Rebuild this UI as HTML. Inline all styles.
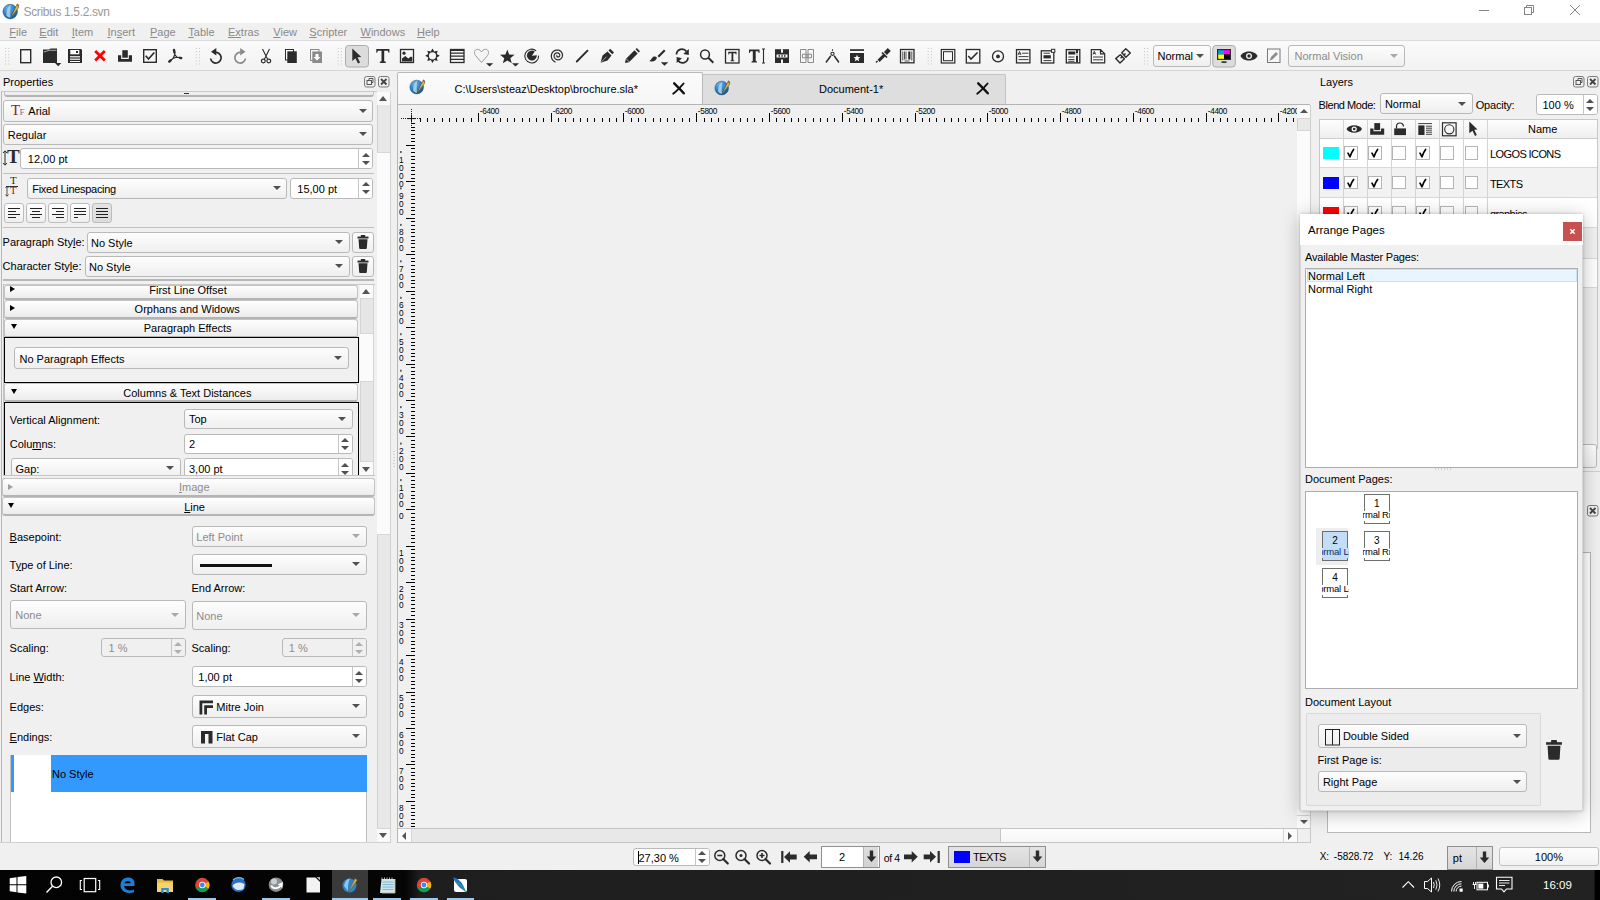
<!DOCTYPE html><html><head><meta charset="utf-8"><style>
*{margin:0;padding:0}
html,body{width:1600px;height:900px;overflow:hidden;background:#f0f0f0}
body{position:relative;font-family:"Liberation Sans",sans-serif;font-size:11px;color:#000}
body div{position:absolute;box-sizing:border-box}
.t{white-space:nowrap;line-height:14px;font-size:11px}
.combo{border:1px solid #b9b9b9;border-radius:3px;background:linear-gradient(#fdfdfd,#efefef)}
.spin{border:1px solid #b9b9b9;border-radius:3px;background:#fff;overflow:hidden}
.hdr{border:1px solid #c4c4c4;border-bottom:2px solid #b4b4b4;border-radius:3px;background:linear-gradient(#fefefe,#ececec)}
svg{position:absolute;overflow:visible}
u{text-decoration:underline}
</style></head><body><div style="left:0px;top:0px;width:1600px;height:23px;background:#fff"></div>
<svg style="left:1.5px;top:2px" width="17" height="17" viewBox="0 0 17 17">
<defs><radialGradient id="sgtitle" cx="0.35" cy="0.25" r="0.85"><stop offset="0" stop-color="#6fb4e6"/><stop offset="0.55" stop-color="#2a7cc0"/><stop offset="1" stop-color="#0d4f86"/></radialGradient></defs>
<circle cx="8.2" cy="9.6" r="7.3" fill="url(#sgtitle)" stroke="#174a73" stroke-width="0.5"/>
<path d="M8.8 2.6 C5.5 5 4 9.5 4.5 13.8 C6 15.2 7.5 15.8 8.6 15.9 C8 11 8.2 6.5 8.8 2.6 Z" fill="#a9d6f3" opacity="0.85"/>
<path d="M8.3 16.2 L14.6 3.2 L17 5.2 Z" fill="#d9b35a" stroke="#6b4c16" stroke-width="0.55" stroke-linejoin="round"/>
<path d="M14.3 2.5 L15.6 1.6 L17.3 3.4 L16.6 4.8 Z" fill="#8a6420"/>
</svg>
<div class="t" style="left:23.5px;top:4.64px;font-size:12px;line-height:14px;color:#999;letter-spacing:-0.35px">Scribus 1.5.2.svn</div>
<svg style="left:1470px;top:0" width="130" height="23">
<line x1="9" y1="10.5" x2="19" y2="10.5" stroke="#858585" stroke-width="1"/>
<rect x="54.5" y="7.5" width="7" height="7" fill="none" stroke="#858585"/>
<path d="M56.5 7.5 V5.5 H63.5 V12.5 H61.5" fill="none" stroke="#858585"/>
<path d="M100 5 L110 15 M110 5 L100 15" stroke="#858585" stroke-width="1"/>
</svg>
<div style="left:0px;top:23px;width:1600px;height:17px;background:#f0f0f0"></div>
<div class="t" style="left:9.3px;top:25.19px;font-size:11px;line-height:14px;color:#8a8a8a"><u>F</u>ile</div>
<div class="t" style="left:39.3px;top:25.19px;font-size:11px;line-height:14px;color:#8a8a8a"><u>E</u>dit</div>
<div class="t" style="left:71.8px;top:25.19px;font-size:11px;line-height:14px;color:#8a8a8a"><u>I</u>tem</div>
<div class="t" style="left:107.5px;top:25.19px;font-size:11px;line-height:14px;color:#8a8a8a"><u>I</u>n<u>s</u>ert</div>
<div class="t" style="left:150px;top:25.19px;font-size:11px;line-height:14px;color:#8a8a8a"><u>P</u>age</div>
<div class="t" style="left:188.3px;top:25.19px;font-size:11px;line-height:14px;color:#8a8a8a"><u>T</u>able</div>
<div class="t" style="left:228px;top:25.19px;font-size:11px;line-height:14px;color:#8a8a8a"><u>E</u><u>x</u>tras</div>
<div class="t" style="left:273.3px;top:25.19px;font-size:11px;line-height:14px;color:#8a8a8a"><u>V</u>iew</div>
<div class="t" style="left:309.3px;top:25.19px;font-size:11px;line-height:14px;color:#8a8a8a"><u>S</u>cripter</div>
<div class="t" style="left:360.5px;top:25.19px;font-size:11px;line-height:14px;color:#8a8a8a"><u>W</u>indows</div>
<div class="t" style="left:417px;top:25.19px;font-size:11px;line-height:14px;color:#8a8a8a"><u>H</u>elp</div>
<div style="left:0px;top:40px;width:1600px;height:31px;background:linear-gradient(#fafafa,#f2f2f2);border-top:1px solid #dcdcdc;border-bottom:1px solid #d6d6d6"></div>
<svg style="left:0;top:0" width="1600" height="72" viewBox="0 0 1600 72"><rect x="5.1" y="48.0" width="1" height="1" fill="#c4c4c4"/><rect x="5.1" y="51.1" width="1" height="1" fill="#c4c4c4"/><rect x="5.1" y="54.2" width="1" height="1" fill="#c4c4c4"/><rect x="5.1" y="57.3" width="1" height="1" fill="#c4c4c4"/><rect x="5.1" y="60.4" width="1" height="1" fill="#c4c4c4"/><rect x="5.1" y="63.5" width="1" height="1" fill="#c4c4c4"/><rect x="8.3" y="48.0" width="1" height="1" fill="#c4c4c4"/><rect x="8.3" y="51.1" width="1" height="1" fill="#c4c4c4"/><rect x="8.3" y="54.2" width="1" height="1" fill="#c4c4c4"/><rect x="8.3" y="57.3" width="1" height="1" fill="#c4c4c4"/><rect x="8.3" y="60.4" width="1" height="1" fill="#c4c4c4"/><rect x="8.3" y="63.5" width="1" height="1" fill="#c4c4c4"/><rect x="195.8" y="48.0" width="1" height="1" fill="#c4c4c4"/><rect x="195.8" y="51.1" width="1" height="1" fill="#c4c4c4"/><rect x="195.8" y="54.2" width="1" height="1" fill="#c4c4c4"/><rect x="195.8" y="57.3" width="1" height="1" fill="#c4c4c4"/><rect x="195.8" y="60.4" width="1" height="1" fill="#c4c4c4"/><rect x="195.8" y="63.5" width="1" height="1" fill="#c4c4c4"/><rect x="199.0" y="48.0" width="1" height="1" fill="#c4c4c4"/><rect x="199.0" y="51.1" width="1" height="1" fill="#c4c4c4"/><rect x="199.0" y="54.2" width="1" height="1" fill="#c4c4c4"/><rect x="199.0" y="57.3" width="1" height="1" fill="#c4c4c4"/><rect x="199.0" y="60.4" width="1" height="1" fill="#c4c4c4"/><rect x="199.0" y="63.5" width="1" height="1" fill="#c4c4c4"/><rect x="337.7" y="48.0" width="1" height="1" fill="#c4c4c4"/><rect x="337.7" y="51.1" width="1" height="1" fill="#c4c4c4"/><rect x="337.7" y="54.2" width="1" height="1" fill="#c4c4c4"/><rect x="337.7" y="57.3" width="1" height="1" fill="#c4c4c4"/><rect x="337.7" y="60.4" width="1" height="1" fill="#c4c4c4"/><rect x="337.7" y="63.5" width="1" height="1" fill="#c4c4c4"/><rect x="340.9" y="48.0" width="1" height="1" fill="#c4c4c4"/><rect x="340.9" y="51.1" width="1" height="1" fill="#c4c4c4"/><rect x="340.9" y="54.2" width="1" height="1" fill="#c4c4c4"/><rect x="340.9" y="57.3" width="1" height="1" fill="#c4c4c4"/><rect x="340.9" y="60.4" width="1" height="1" fill="#c4c4c4"/><rect x="340.9" y="63.5" width="1" height="1" fill="#c4c4c4"/><rect x="927.7" y="48.0" width="1" height="1" fill="#c4c4c4"/><rect x="927.7" y="51.1" width="1" height="1" fill="#c4c4c4"/><rect x="927.7" y="54.2" width="1" height="1" fill="#c4c4c4"/><rect x="927.7" y="57.3" width="1" height="1" fill="#c4c4c4"/><rect x="927.7" y="60.4" width="1" height="1" fill="#c4c4c4"/><rect x="927.7" y="63.5" width="1" height="1" fill="#c4c4c4"/><rect x="930.9" y="48.0" width="1" height="1" fill="#c4c4c4"/><rect x="930.9" y="51.1" width="1" height="1" fill="#c4c4c4"/><rect x="930.9" y="54.2" width="1" height="1" fill="#c4c4c4"/><rect x="930.9" y="57.3" width="1" height="1" fill="#c4c4c4"/><rect x="930.9" y="60.4" width="1" height="1" fill="#c4c4c4"/><rect x="930.9" y="63.5" width="1" height="1" fill="#c4c4c4"/><rect x="1144.0" y="48.0" width="1" height="1" fill="#c4c4c4"/><rect x="1144.0" y="51.1" width="1" height="1" fill="#c4c4c4"/><rect x="1144.0" y="54.2" width="1" height="1" fill="#c4c4c4"/><rect x="1144.0" y="57.3" width="1" height="1" fill="#c4c4c4"/><rect x="1144.0" y="60.4" width="1" height="1" fill="#c4c4c4"/><rect x="1144.0" y="63.5" width="1" height="1" fill="#c4c4c4"/><rect x="1147.2" y="48.0" width="1" height="1" fill="#c4c4c4"/><rect x="1147.2" y="51.1" width="1" height="1" fill="#c4c4c4"/><rect x="1147.2" y="54.2" width="1" height="1" fill="#c4c4c4"/><rect x="1147.2" y="57.3" width="1" height="1" fill="#c4c4c4"/><rect x="1147.2" y="60.4" width="1" height="1" fill="#c4c4c4"/><rect x="1147.2" y="63.5" width="1" height="1" fill="#c4c4c4"/><rect x="20.7" y="49.7" width="10" height="13" fill="none" stroke="#2b2b2b" stroke-width="1.4"/><path d="M43 49.4 H49 L50.5 48.6 H57 V63.1 H43 Z" fill="#2b2b2b"/><path d="M43.5 52 L49.5 50.3 H56.5" stroke="#fff" stroke-width="0.6" fill="none"/><path d="M55 63 H61.3 L58.2 66.3 Z" fill="#2b2b2b"/><path d="M68 49 H81 L82 50 V63 H68 Z" fill="#2b2b2b"/><rect x="70.3" y="50" width="9" height="4.3" fill="#fff"/><rect x="76" y="51" width="2" height="2" fill="#2b2b2b"/><rect x="70" y="56.2" width="10" height="1.2" fill="#fff"/><rect x="70" y="58.6" width="10" height="1.2" fill="#fff"/><rect x="70" y="61" width="10" height="1" fill="#fff"/><path d="M95.2 51 L104.8 60.5 M104.8 51 L95.2 60.5" stroke="#f00" stroke-width="2.8"/><path d="M118 55.3 H121.2 V59 H128.8 V55.3 H132 V61.8 H118 Z" fill="#2b2b2b"/><rect x="122.3" y="50.2" width="5.5" height="7.5" fill="#2b2b2b"/><rect x="143.7" y="49.7" width="12.6" height="12.6" fill="none" stroke="#2b2b2b" stroke-width="1.4"/><path d="M145.7 55.8 L148.5 59 L154.3 52.5" stroke="#2b2b2b" stroke-width="1.7" fill="none"/><path d="M174 50 L174.5 52.5" stroke="#2b2b2b" stroke-width="2.4" stroke-linecap="round"/><path d="M180 57.8 L181.3 58.1" stroke="#2b2b2b" stroke-width="2.4" stroke-linecap="round"/><path d="M169.3 61.6 L170.5 60.5" stroke="#2b2b2b" stroke-width="2.4" stroke-linecap="round"/><path d="M174.2 50.5 L174.8 54.5 L176.8 57.2 L181 58 M176.8 57.2 L173.2 58.3 L169.2 61.7 M174.8 54.5 L173.2 58.3" stroke="#2b2b2b" stroke-width="1.2" fill="none" stroke-linejoin="round"/><path d="M215 52.5 A5.3 5.3 0 1 1 210.6 58.5" stroke="#2b2b2b" stroke-width="1.7" fill="none"/><path d="M211 51.8 L216.3 48 V55.5 Z" fill="#2b2b2b"/><path d="M241 52.5 A5.3 5.3 0 1 0 245.4 58.5" stroke="#8a8a8a" stroke-width="1.7" fill="none"/><path d="M245.5 51.8 L240.2 48 V55.5 Z" fill="#8a8a8a"/><path d="M262.5 49 L267.5 59 M269.5 49 L264.5 59" stroke="#2b2b2b" stroke-width="1.1"/><circle cx="263.3" cy="61" r="1.9" fill="none" stroke="#2b2b2b" stroke-width="1.2"/><circle cx="268.8" cy="61" r="1.9" fill="none" stroke="#2b2b2b" stroke-width="1.2"/><rect x="285.5" y="49.5" width="8" height="10.5" fill="#fff" stroke="#2b2b2b" stroke-width="1"/><rect x="287.3" y="51.3" width="9.5" height="11.7" fill="#2b2b2b"/><rect x="310.5" y="49.5" width="8.5" height="11" fill="#f5f5f5" stroke="#8a8a8a" stroke-width="1"/><rect x="312.3" y="51.5" width="9.7" height="11.5" fill="#8a8a8a"/><path d="M315.5 54 H318.5 V57 H320.5 L317 60.5 L313.5 57 H315.5 Z" fill="#fff"/><rect x="345.5" y="45.5" width="23" height="21.5" rx="3" fill="#dcdcdc" stroke="#acacac"/><path d="M352.3 48.5 L361.3 57 L357.5 57.3 L360 62.6 L358 63.6 L355.5 58.3 L352.3 61 Z" fill="#2b2b2b"/><path d="M376.3 49 H389.4 V52.8 H388.6 L387.8 50.8 H384.2 V61.3 L385.8 61.8 V63 H379.8 V61.8 L381.5 61.3 V50.8 H377.9 L377.1 52.8 H376.3 Z" fill="#2b2b2b"/><rect x="400.5" y="49.5" width="13" height="13" fill="none" stroke="#2b2b2b" stroke-width="1.3"/><circle cx="404" cy="53.2" r="1.6" fill="#2b2b2b"/><path d="M402 61.5 V58.5 L405.3 56 L408.2 58.5 L411 56.5 L412.3 57.3 V61.5 Z" fill="#2b2b2b"/><polygon points="439.80,55.80 436.75,57.56 437.66,60.96 434.26,60.05 432.50,63.10 430.74,60.05 427.34,60.96 428.25,57.56 425.20,55.80 428.25,54.04 427.34,50.64 430.74,51.55 432.50,48.50 434.26,51.55 437.66,50.64 436.75,54.04" fill="#2b2b2b"/><circle cx="432.5" cy="55.8" r="3.6" fill="#f7f7f7"/><rect x="450.5" y="49.5" width="13.5" height="13" fill="none" stroke="#2b2b2b" stroke-width="1.3"/><rect x="450.5" y="49.5" width="13.5" height="1.5" fill="#2b2b2b"/><path d="M450.5 53.2 H464 M450.5 56.2 H464 M450.5 59.3 H464" stroke="#2b2b2b" stroke-width="1.2"/><path d="M481.5 62.5 L475.5 55.5 C473.5 53 474.5 49.3 477.5 49.3 C479.5 49.3 480.8 50.8 481.5 52 C482.2 50.8 483.5 49.3 485.5 49.3 C488.5 49.3 489.5 53 487.5 55.5 Z" fill="#f5f5f5" stroke="#9a9a9a" stroke-width="1"/><path d="M486 63.3 H493.2 L489.6 66.5 Z" fill="#2b2b2b"/><polygon points="507.30,49.60 509.18,54.61 514.53,54.85 510.34,58.19 511.77,63.35 507.30,60.40 502.83,63.35 504.26,58.19 500.07,54.85 505.42,54.61" fill="#2b2b2b"/><path d="M512 63.3 H519 L515.5 66.5 Z" fill="#2b2b2b"/><path d="M536.2 50.8 A6.9 6.9 0 1 0 538.6 55.6" stroke="#2b2b2b" stroke-width="1.1" fill="none"/><path d="M531.9 55.7 L534.8 51.4 A5 5 0 1 0 536.9 55.3 Z" fill="#2b2b2b"/><path d="M557.28 55.36 L557.20 55.38 L557.13 55.41 L557.06 55.45 L556.99 55.51 L556.93 55.58 L556.88 55.67 L556.84 55.76 L556.82 55.87 L556.81 55.99 L556.82 56.11 L556.84 56.23 L556.89 56.36 L556.95 56.48 L557.04 56.60 L557.14 56.71 L557.26 56.81 L557.40 56.89 L557.56 56.96 L557.73 57.01 L557.90 57.03 L558.09 57.04 L558.28 57.02 L558.48 56.97 L558.67 56.89 L558.86 56.79 L559.03 56.67 L559.20 56.51 L559.35 56.33 L559.47 56.13 L559.58 55.91 L559.65 55.68 L559.70 55.42 L559.72 55.16 L559.70 54.89 L559.65 54.62 L559.56 54.36 L559.44 54.10 L559.28 53.85 L559.09 53.62 L558.87 53.41 L558.61 53.22 L558.34 53.06 L558.04 52.94 L557.72 52.86 L557.38 52.81 L557.04 52.80 L556.69 52.84 L556.34 52.92 L556.00 53.05 L555.67 53.22 L555.36 53.43 L555.07 53.68 L554.81 53.97 L554.59 54.30 L554.40 54.65 L554.26 55.04 L554.16 55.44 L554.12 55.86 L554.12 56.28 L554.18 56.71 L554.29 57.14 L554.45 57.55 L554.67 57.95 L554.93 58.32 L555.25 58.67 L555.60 58.97 L556.00 59.24 L556.44 59.45 L556.90 59.62 L557.38 59.73 L557.88 59.78 L558.39 59.76 L558.91 59.69 L559.41 59.55 L559.90 59.35 L560.37 59.09 L560.80 58.77 L561.20 58.39 L561.56 57.97 L561.86 57.50 L562.11 56.99 L562.30 56.45 L562.42 55.88 L562.47 55.29 L562.45 54.70 L562.36 54.11 L562.19 53.53 L561.96 52.96 L561.65 52.42 L561.28 51.92 L560.84 51.47 L560.35 51.06 L559.81 50.71 L559.22 50.43 L558.60 50.22 L557.95 50.09 L557.28 50.04 L556.60 50.06 L555.93 50.17 L555.27 50.36 L554.63 50.63 L554.02 50.99 L553.45 51.41 L552.94 51.91 L552.48 52.47 L552.10 53.08 L551.78 53.74 L551.55 54.45 L551.40 55.18 L551.34 55.93 L551.37 56.69 L551.50 57.44 L551.72 58.18 L552.02 58.90 L552.42 59.58 L552.89 60.21 L553.45 60.78 L554.07 61.29 L554.76 61.72 L555.50 62.07" stroke="#2b2b2b" stroke-width="1.25" fill="none"/><path d="M576.8 61.5 L587.5 50.7" stroke="#2b2b2b" stroke-width="1.9" stroke-linecap="round"/><path d="M600.6 62.7 L602.5 55.5 L607.5 51.5 L611.5 55.5 L607.5 60.5 Z" fill="#2b2b2b"/><path d="M608.5 50.5 L610.2 48.8 L614 52.6 L612.3 54.3 Z" fill="#2b2b2b"/><path d="M601 62.3 L606.5 56.7" stroke="#f5f5f5" stroke-width="0.6"/><path d="M625 63 L625.8 59 L634.5 50.3 L637.7 53.5 L629 62.2 Z" fill="#2b2b2b"/><path d="M635.5 49.3 L636.8 48 L640 51.2 L638.7 52.5 Z" fill="#2b2b2b"/><path d="M626 58.7 L629.3 62" stroke="#f5f5f5" stroke-width="0.6"/><path d="M649.3 61 C651 60.5 651.5 58 653 57 C654 56.2 656 56.5 657 57.8 C656 61 653 62.5 649.3 61 Z" fill="#2b2b2b"/><path d="M657.5 56 L664 49.5 L665.5 51 L659 57.5 Z" fill="#2b2b2b"/><path d="M660.8 62.3 H668.3 L664.5 65.8 Z" fill="#2b2b2b"/><path d="M676.5 54.5 A5.5 5.5 0 0 1 686.5 51.5 M688 57.5 A5.5 5.5 0 0 1 678 60.5" stroke="#2b2b2b" stroke-width="1.7" fill="none"/><path d="M688.8 49 V55 L683.3 54 Z" fill="#2b2b2b"/><path d="M676.6 63 V57 L682 58.2 Z" fill="#2b2b2b"/><circle cx="705" cy="54.5" r="4.4" fill="none" stroke="#2b2b2b" stroke-width="1.5"/><path d="M708.3 57.8 L713.3 62.7" stroke="#2b2b2b" stroke-width="2"/><rect x="725.5" y="49.5" width="13.5" height="13.5" fill="none" stroke="#2b2b2b" stroke-width="1.3"/><path d="M728.3 51.8 H736.5 V54.6 H735.8 L735.3 53.2 H733.3 V60.3 L734.3 60.6 V61.3 H730.5 V60.6 L731.5 60.3 V53.2 H729.5 L729 54.6 H728.3 Z" fill="#2b2b2b"/><path d="M749 49.5 H759.5 V53 H758.8 L758 51.2 H755.7 V61 L757 61.5 V62.5 H751.5 V61.5 L752.8 61 V51.2 H750.5 L749.7 53 H749 Z" fill="#2b2b2b"/><path d="M762 49 H765 M763.5 49 V63 M762 63 H765" stroke="#2b2b2b" stroke-width="1.1"/><rect x="775" y="49.2" width="14" height="13.8" fill="#2b2b2b"/><rect x="781" y="49.2" width="2" height="3.5" fill="#f5f5f5"/><rect x="781" y="59.5" width="2" height="3.5" fill="#f5f5f5"/><rect x="776.5" y="54.5" width="11" height="3" fill="#f5f5f5"/><rect x="778.5" y="55.2" width="1.5" height="1.5" fill="#2b2b2b"/><rect x="781.3" y="55.2" width="1.5" height="1.5" fill="#2b2b2b"/><rect x="784" y="55.2" width="1.5" height="1.5" fill="#2b2b2b"/><path d="M800.5 49.5 H806 V62.5 H800.5 Z M808 49.5 H813.5 V62.5 H808 Z M802.5 54.2 H811.5 V57.8 H802.5 Z M806 54.2 V57.8 M808 54.2 V57.8" fill="none" stroke="#8a8a8a" stroke-width="1"/><circle cx="832.5" cy="53.8" r="1.6" fill="none" stroke="#2b2b2b" stroke-width="1.1"/><path d="M832.5 49.3 V50.8" stroke="#2b2b2b" stroke-width="1.1"/><path d="M830.5 56.2 L826.3 62 M834.5 56.2 L838.6 62" stroke="#2b2b2b" stroke-width="1.5" stroke-linecap="round"/><rect x="850" y="49.2" width="14" height="1.7" fill="#2b2b2b"/><rect x="850" y="53" width="14" height="10" fill="#2b2b2b"/><polygon points="857.00,54.70 857.94,57.01 860.42,57.19 858.52,58.79 859.12,61.21 857.00,59.90 854.88,61.21 855.48,58.79 853.58,57.19 856.06,57.01" fill="#fff"/><path d="M875.5 62 L877 60.5 L878 61.5 L876.5 63 Z" fill="#2b2b2b"/><path d="M877.5 59.8 L883.5 53.8 L885.6 55.9 L879.6 61.9 Z" fill="#2b2b2b"/><path d="M882 52.5 L887 57.5 M884.5 52.5 L887.8 49.2 L889.6 51 L886.3 54.3" stroke="#2b2b2b" stroke-width="1.7" fill="#2b2b2b"/><rect x="900.5" y="49.5" width="13.5" height="13.3" fill="none" stroke="#2b2b2b" stroke-width="1.3"/><path d="M902.8 51.5 V60.5 M904.5 51.5 V59.5 M906 51.5 V59.5 M908.6 51.5 V59.5 M911.8 51.5 V60.5 M904.5 61 H909.5" stroke="#2b2b2b" stroke-width="0.8"/><rect x="908.8" y="51.5" width="1.6" height="8" fill="#2b2b2b"/><rect x="941.3" y="49.5" width="13.5" height="13.5" fill="none" stroke="#2b2b2b" stroke-width="1.2"/><rect x="943.5" y="51.7" width="9" height="9" fill="none" stroke="#2b2b2b" stroke-width="1"/><rect x="966.3" y="49.5" width="13.5" height="13.5" fill="none" stroke="#2b2b2b" stroke-width="1.3"/><path d="M968.3 56 L971 59 L977.5 52.5" stroke="#2b2b2b" stroke-width="1.6" fill="none"/><circle cx="998" cy="56.4" r="5.5" fill="none" stroke="#2b2b2b" stroke-width="1.3"/><circle cx="998" cy="56.4" r="1.9" fill="#2b2b2b"/><rect x="1016.5" y="49.6" width="13.4" height="13.3" fill="none" stroke="#2b2b2b" stroke-width="1.3"/><path d="M1018 55 L1019.5 51.5 L1021 55 M1018.5 53.8 H1020.5 M1022 53.2 H1028.5 M1018.5 56.6 H1028.5 M1018.5 59.6 H1028.5" stroke="#2b2b2b" stroke-width="0.9" fill="none"/><rect x="1041.3" y="50.8" width="12.5" height="12.2" fill="none" stroke="#2b2b2b" stroke-width="1.3"/><rect x="1051.5" y="49.3" width="3.3" height="3" fill="#fff" stroke="#2b2b2b" stroke-width="1"/><path d="M1043.5 53.2 H1050 M1043.5 60.6 H1051.5" stroke="#2b2b2b" stroke-width="0.9"/><rect x="1043.5" y="55.2" width="7.3" height="3.2" fill="#2b2b2b"/><rect x="1066.3" y="49.6" width="13.5" height="13.3" fill="none" stroke="#2b2b2b" stroke-width="1.3"/><rect x="1068.3" y="51.5" width="7" height="3" fill="#2b2b2b"/><path d="M1068.3 57 H1074.5 M1068.3 59.5 H1074.5 M1068.3 61.3 H1074.5" stroke="#2b2b2b" stroke-width="0.9"/><rect x="1076" y="50" width="2" height="12.5" fill="#2b2b2b"/><rect x="1076.3" y="53" width="1.4" height="3" fill="#fff"/><path d="M1091.3 49.6 H1100.5 L1104.7 53.8 V62.9 H1091.3 Z M1100.5 49.6 V53.8 H1104.7" fill="none" stroke="#2b2b2b" stroke-width="1.2"/><path d="M1093 54.5 L1094.3 51.3 L1095.6 54.5 M1093.5 53.4 H1095.2 M1093 57 H1103 M1093 59.8 H1103" stroke="#2b2b2b" stroke-width="0.9" fill="none"/><path d="M1125.8 48.8 L1130.3 53.1 L1125.9 57.2 L1121.8 52.8 Z M1120.3 54.7 L1124.4 58.8 L1120 63 L1115.7 58.6 Z M1120.6 58.3 L1122.6 56.3 M1123.5 55.4 L1125.5 53.4" fill="none" stroke="#2b2b2b" stroke-width="1.4" stroke-linejoin="round"/><rect x="1212.8" y="45.5" width="22.5" height="21.5" rx="3" fill="#dcdcdc" stroke="#acacac"/><rect x="1217" y="49" width="14" height="11" fill="#2b2b2b"/><rect x="1218.2" y="50.2" width="5.8" height="4.3" fill="#00a0ff"/><rect x="1224" y="50.2" width="5.8" height="4.3" fill="#ff00ff"/><rect x="1218.2" y="54.5" width="5.8" height="4.3" fill="#ffff00"/><rect x="1224" y="54.5" width="5.8" height="4.3" fill="#000"/><rect x="1221.5" y="61.3" width="5" height="1.6" fill="#2b2b2b"/><path d="M1240.5 56 C1243 50 1255 50 1257.5 56 C1255 62 1243 62 1240.5 56 Z" fill="#2b2b2b"/><circle cx="1249" cy="56" r="3" fill="#f5f5f5"/><circle cx="1249" cy="56" r="1.7" fill="#2b2b2b"/><rect x="1267.5" y="49" width="12.5" height="13.5" fill="#f7f7f7" stroke="#777" stroke-width="1"/><path d="M1269.5 61 L1271 57 L1276 52 L1278 54 L1273 59 Z" fill="#8c8c8c"/></svg>
<div class="combo" style="left:1152.5px;top:45px;width:58px;height:21.5px"><div class="t" style="left:4px;top:3.25px;color:#000">Normal</div><div style="position:absolute;left:42.5px;top:7.5px;width:0;height:0;border-left:4.0px solid transparent;border-right:4.0px solid transparent;border-top:4.5px solid #505050"></div></div>
<div class="combo" style="left:1287.5px;top:45px;width:117px;height:21.5px"><div class="t" style="left:6px;top:3.25px;color:#8c8c8c">Normal Vision</div><div style="position:absolute;left:101.5px;top:7.5px;width:0;height:0;border-left:4.0px solid transparent;border-right:4.0px solid transparent;border-top:4.5px solid #a8a8a8"></div></div>
<div class="t" style="left:3px;top:74.69px;font-size:11px;line-height:14px;">Properties</div>
<div style="left:1px;top:91px;width:376px;height:752px;border-left:1px solid #b8b8b8;border-top:1px solid #c8c8c8"></div>
<div class="hdr" style="left:3.5px;top:80px;width:370px;height:17px"></div>
<div style="left:184px;top:92.5px;width:5px;height:1px;background:#333"></div>
<div style="left:2px;top:72px;width:372px;height:19.5px;background:#f0f0f0"></div>
<div class="t" style="left:3px;top:74.69px;font-size:11px;line-height:14px;">Properties</div>
<div style="left:1px;top:91px;width:376px;height:1px;background:#c8c8c8"></div>
<svg style="left:363px;top:75px" width="28" height="14">
<rect x="1.5" y="1.5" width="10.5" height="10.5" rx="2" fill="none" stroke="#7a7a7a" stroke-width="1"/>
<rect x="4" y="5.5" width="4.5" height="4" fill="none" stroke="#555" stroke-width="1"/><path d="M6 5.5 V3.5 H10 V7.5 H8.5" fill="none" stroke="#555" stroke-width="1"/>
<rect x="15.5" y="1.5" width="10.5" height="10.5" rx="2" fill="none" stroke="#7a7a7a" stroke-width="1"/>
<path d="M18 4 L23.5 9.5 M23.5 4 L18 9.5" stroke="#444" stroke-width="1.8"/>
</svg>
<div style="left:376.5px;top:91.5px;width:14px;height:751px;background:#e8e8e8;border:1px solid #d0d0d0"></div>
<div style="left:377px;top:92px;width:13px;height:13px;background:#fafafa"><div style="position:absolute;left:2.0px;top:3.5px;width:0;height:0;border-left:4.5px solid transparent;border-right:4.5px solid transparent;border-bottom:5px solid #555"></div></div>
<div style="left:377px;top:151.5px;width:13px;height:383px;background:#fbfbfb;border-top:1px solid #d6d6d6;border-bottom:1px solid #d6d6d6"></div>
<div style="left:377px;top:828px;width:13px;height:14px;background:#fafafa;border-top:1px solid #d6d6d6"><div style="position:absolute;left:2.0px;top:4.0px;width:0;height:0;border-left:4.5px solid transparent;border-right:4.5px solid transparent;border-top:5px solid #555"></div></div>
<div class="combo" style="left:2.8px;top:99.5px;width:370.7px;height:22.5px"><div class="t" style="left:24.5px;top:3.75px;color:#000">Arial</div><div style="position:absolute;left:355.2px;top:8.0px;width:0;height:0;border-left:4.0px solid transparent;border-right:4.0px solid transparent;border-top:4.5px solid #505050"></div></div>
<div style="left:11px;top:101px;font-family:'Liberation Serif',serif;font-size:15px;line-height:18px;color:#8a1c1c">T</div><div style="left:19.5px;top:106px;font-family:'Liberation Serif',serif;font-size:9px;line-height:12px;color:#777">F</div>
<div class="combo" style="left:2.8px;top:124px;width:370.7px;height:20.5px"><div class="t" style="left:4px;top:2.75px;color:#000">Regular</div><div style="position:absolute;left:355.2px;top:7.0px;width:0;height:0;border-left:4.0px solid transparent;border-right:4.0px solid transparent;border-top:4.5px solid #505050"></div></div>
<div style="left:7px;top:146px;font-family:'Liberation Serif',serif;font-weight:bold;font-size:19px;line-height:22px;color:#2b2b2b">T</div>
<svg style="left:2px;top:150px" width="6" height="16"><path d="M3 1 V15 M1 3 L3 0.8 L5 3 M1 13 L3 15.2 L5 13" stroke="#2b2b2b" stroke-width="1" fill="none"/></svg>
<div class="spin" style="left:20.3px;top:148px;width:353.2px;height:20.5px;background:#fff"><div class="t" style="left:6.5px;top:2.75px;color:#000">12,00 pt</div><div style="position:absolute;right:0;top:0;bottom:0;width:14px;border-left:1px solid #c6c6c6;background:#fff"><div style="position:absolute;left:2.5px;top:3.5px;width:0;height:0;border-left:4.0px solid transparent;border-right:4.0px solid transparent;border-bottom:4.5px solid #505050"></div><div style="position:absolute;left:2.5px;top:11.5px;width:0;height:0;border-left:4.0px solid transparent;border-right:4.0px solid transparent;border-top:4.5px solid #505050"></div></div></div>
<div style="left:3px;top:172.5px;width:371px;height:1px;background:#c0c0c0"></div>
<div style="left:10px;top:174px;font-family:'Liberation Serif',serif;font-size:11px;line-height:12px;color:#2b2b2b">T</div><div style="left:10px;top:184px;font-family:'Liberation Serif',serif;font-size:11px;line-height:12px;color:#e00">T</div><div style="left:6px;top:185.5px;width:12px;height:1px;background:#333"></div>
<svg style="left:5px;top:186px" width="4" height="11"><path d="M2 0.5 V10 M0.5 2 L2 0.3 L3.5 2 M0.5 8.5 L2 10.3 L3.5 8.5" stroke="#2b2b2b" stroke-width="0.8" fill="none"/></svg>
<div class="combo" style="left:26.8px;top:177.5px;width:260.7px;height:21px"><div class="t" style="left:4.5px;top:3.0px;color:#000"><span style="letter-spacing:-0.3px">Fixed Linespacing</span></div><div style="position:absolute;left:245.2px;top:7.25px;width:0;height:0;border-left:4.0px solid transparent;border-right:4.0px solid transparent;border-top:4.5px solid #505050"></div></div>
<div class="spin" style="left:290.3px;top:177.5px;width:83px;height:21px;background:#fff"><div class="t" style="left:6px;top:3.0px;color:#000">15,00 pt</div><div style="position:absolute;right:0;top:0;bottom:0;width:14px;border-left:1px solid #c6c6c6;background:#fff"><div style="position:absolute;left:2.5px;top:3.75px;width:0;height:0;border-left:4.0px solid transparent;border-right:4.0px solid transparent;border-bottom:4.5px solid #505050"></div><div style="position:absolute;left:2.5px;top:11.75px;width:0;height:0;border-left:4.0px solid transparent;border-right:4.0px solid transparent;border-top:4.5px solid #505050"></div></div></div>
<div style="left:3.6px;top:202.5px;width:20.6px;height:20.6px;border:1px solid #bcbcbc;border-radius:3px;background:linear-gradient(#fefefe,#efefef)"></div>
<div style="left:25.9px;top:202.5px;width:20.6px;height:20.6px;border:1px solid #bcbcbc;border-radius:3px;background:linear-gradient(#fefefe,#efefef)"></div>
<div style="left:47.9px;top:202.5px;width:20.6px;height:20.6px;border:1px solid #bcbcbc;border-radius:3px;background:linear-gradient(#fefefe,#efefef)"></div>
<div style="left:69.9px;top:202.5px;width:20.6px;height:20.6px;border:1px solid #bcbcbc;border-radius:3px;background:linear-gradient(#fefefe,#efefef)"></div>
<div style="left:91.9px;top:202.5px;width:20.6px;height:20.6px;border:1px solid #bcbcbc;border-radius:3px;background:linear-gradient(#e4e4e4,#dcdcdc)"></div>
<svg style="left:0;top:0" width="120" height="230"><rect x="8" y="208" width="12" height="1" fill="#222"/><rect x="8" y="211" width="8" height="1" fill="#222"/><rect x="8" y="214" width="12" height="1" fill="#222"/><rect x="8" y="217" width="8" height="1" fill="#222"/><rect x="30" y="208" width="12" height="1" fill="#222"/><rect x="32" y="211" width="8" height="1" fill="#222"/><rect x="30" y="214" width="12" height="1" fill="#222"/><rect x="32" y="217" width="8" height="1" fill="#222"/><rect x="52" y="208" width="12" height="1" fill="#222"/><rect x="56" y="211" width="8" height="1" fill="#222"/><rect x="52" y="214" width="12" height="1" fill="#222"/><rect x="56" y="217" width="8" height="1" fill="#222"/><rect x="74" y="208" width="12" height="1" fill="#222"/><rect x="74" y="211" width="12" height="1" fill="#222"/><rect x="74" y="214" width="12" height="1" fill="#222"/><rect x="74" y="217" width="4" height="1" fill="#222"/><rect x="96" y="208" width="12" height="1" fill="#222"/><rect x="96" y="211" width="12" height="1" fill="#222"/><rect x="96" y="214" width="12" height="1" fill="#222"/><rect x="96" y="217" width="12" height="1" fill="#222"/></svg>
<div style="left:3px;top:226.5px;width:371px;height:1px;background:#c0c0c0"></div>
<div class="t" style="left:2.6px;top:235.19px;font-size:11px;line-height:14px;">Paragraph Sty<u>l</u>e:</div>
<div class="combo" style="left:86.5px;top:231.5px;width:263px;height:21px"><div class="t" style="left:3.5px;top:3.0px;color:#000">No Style</div><div style="position:absolute;left:247.5px;top:7.25px;width:0;height:0;border-left:4.0px solid transparent;border-right:4.0px solid transparent;border-top:4.5px solid #505050"></div></div>
<div class="combo" style="left:352px;top:231.5px;width:21.5px;height:21px"><svg style="left:4px;top:2.8px" width="12" height="14" viewBox="0 0 12 14"><rect x="0.5" y="1.6" width="11" height="1.9" fill="#2b2b2b"/><rect x="3.8" y="0" width="4.4" height="2" rx="0.6" fill="#2b2b2b"/><path d="M1.5 4.3 H10.5 L9.8 13.3 Q9.7 14 9 14 H3 Q2.3 14 2.2 13.3 Z" fill="#2b2b2b"/></svg></div>
<div class="t" style="left:2.6px;top:258.99px;font-size:11px;line-height:14px;">Character Sty<u>l</u>e:</div>
<div class="combo" style="left:84.5px;top:255.5px;width:265px;height:21px"><div class="t" style="left:3.5px;top:3.0px;color:#000">No Style</div><div style="position:absolute;left:249.5px;top:7.25px;width:0;height:0;border-left:4.0px solid transparent;border-right:4.0px solid transparent;border-top:4.5px solid #505050"></div></div>
<div class="combo" style="left:352px;top:255.5px;width:21.5px;height:21px"><svg style="left:4px;top:2.8px" width="12" height="14" viewBox="0 0 12 14"><rect x="0.5" y="1.6" width="11" height="1.9" fill="#2b2b2b"/><rect x="3.8" y="0" width="4.4" height="2" rx="0.6" fill="#2b2b2b"/><path d="M1.5 4.3 H10.5 L9.8 13.3 Q9.7 14 9 14 H3 Q2.3 14 2.2 13.3 Z" fill="#2b2b2b"/></svg></div>
<div style="left:3px;top:279px;width:371px;height:1.5px;background:#b8b8b8"></div>
<div style="left:3px;top:284px;width:372px;height:191.5px;border-left:1px solid #c0c0c0;border-top:1px solid #c8c8c8;overflow:hidden"></div>
<div class="hdr" style="left:3.8px;top:284.5px;width:354.7px;height:15px"><div style="left:5.2px;top:0.6000000000000227px;width:0;height:0;border-top:3px solid transparent;border-bottom:3px solid transparent;border-left:5.6px solid #000"></div><div class="t" style="left:33.19999999999999px;width:300px;text-align:center;top:-2.55px;color:#000">First Line Offset</div></div>
<div class="hdr" style="left:3.8px;top:299.5px;width:354.7px;height:19px"><div style="left:5.2px;top:4.399999999999977px;width:0;height:0;border-top:3px solid transparent;border-bottom:3px solid transparent;border-left:5.6px solid #000"></div><div class="t" style="left:32.39999999999998px;width:300px;text-align:center;top:1.70px;color:#000">Orphans and Widows</div></div>
<div class="hdr" style="left:3.8px;top:318.5px;width:354.7px;height:19px"><div style="left:6.2px;top:4.5px;width:0;height:0;border-left:3.2px solid transparent;border-right:3.2px solid transparent;border-top:5.8px solid #000"></div><div class="t" style="left:32.89999999999998px;width:300px;text-align:center;top:1.70px;color:#000">Paragraph Effects</div></div>
<div style="left:3.8px;top:337.3px;width:355.2px;height:45.5px;border:1.3px solid #000"></div>
<div class="combo" style="left:14px;top:347.3px;width:334.5px;height:21.5px"><div class="t" style="left:4.5px;top:3.25px;color:#000">No Paragraph Effects</div><div style="position:absolute;left:319.0px;top:7.5px;width:0;height:0;border-left:4.0px solid transparent;border-right:4.0px solid transparent;border-top:4.5px solid #505050"></div></div>
<div class="hdr" style="left:3.8px;top:382.5px;width:354.7px;height:19.5px"><div style="left:6.2px;top:5.5px;width:0;height:0;border-left:3.2px solid transparent;border-right:3.2px solid transparent;border-top:5.8px solid #000"></div><div class="t" style="left:32.599999999999994px;width:300px;text-align:center;top:2.70px;color:#000">Columns &amp; Text Distances</div></div>
<div style="left:3.8px;top:402.4px;width:355.2px;height:80px;border:1.3px solid #000;border-bottom:none"></div>
<div class="t" style="left:9.7px;top:412.69px;font-size:11px;line-height:14px;">Vertical Alignment:</div>
<div class="combo" style="left:183.5px;top:408.5px;width:169px;height:20.5px"><div class="t" style="left:4.5px;top:2.75px;color:#000">Top</div><div style="position:absolute;left:153.5px;top:7.0px;width:0;height:0;border-left:4.0px solid transparent;border-right:4.0px solid transparent;border-top:4.5px solid #505050"></div></div>
<div class="t" style="left:9.7px;top:436.99px;font-size:11px;line-height:14px;">Colu<u>m</u>ns:</div>
<div class="spin" style="left:183.5px;top:434px;width:169px;height:19.5px;background:#fff"><div class="t" style="left:4.5px;top:2.25px;color:#000">2</div><div style="position:absolute;right:0;top:0;bottom:0;width:14px;border-left:1px solid #c6c6c6;background:#fff"><div style="position:absolute;left:2.5px;top:3.0px;width:0;height:0;border-left:4.0px solid transparent;border-right:4.0px solid transparent;border-bottom:4.5px solid #505050"></div><div style="position:absolute;left:2.5px;top:11.0px;width:0;height:0;border-left:4.0px solid transparent;border-right:4.0px solid transparent;border-top:4.5px solid #505050"></div></div></div>
<div class="combo" style="left:11px;top:457.8px;width:169.5px;height:21px"><div class="t" style="left:3.5px;top:3.0px;color:#000">Gap:</div><div style="position:absolute;left:154.0px;top:7.25px;width:0;height:0;border-left:4.0px solid transparent;border-right:4.0px solid transparent;border-top:4.5px solid #505050"></div></div>
<div class="spin" style="left:183.5px;top:457.8px;width:169px;height:21px;background:#fff"><div class="t" style="left:4.5px;top:3.0px;color:#000">3,00 pt</div><div style="position:absolute;right:0;top:0;bottom:0;width:14px;border-left:1px solid #c6c6c6;background:#fff"><div style="position:absolute;left:2.5px;top:3.75px;width:0;height:0;border-left:4.0px solid transparent;border-right:4.0px solid transparent;border-bottom:4.5px solid #505050"></div><div style="position:absolute;left:2.5px;top:11.75px;width:0;height:0;border-left:4.0px solid transparent;border-right:4.0px solid transparent;border-top:4.5px solid #505050"></div></div></div>
<div style="left:359.5px;top:284.5px;width:14px;height:191px;background:#e6e6e6;border:1px solid #d4d4d4"></div>
<div style="left:360px;top:285px;width:13px;height:13.5px;background:#fafafa;border-bottom:1px solid #d6d6d6"><div style="position:absolute;left:2.0px;top:4.0px;width:0;height:0;border-left:4.5px solid transparent;border-right:4.5px solid transparent;border-bottom:5px solid #555"></div></div>
<div style="left:360px;top:332.5px;width:13px;height:49px;background:#fbfbfb;border-top:1px solid #d6d6d6;border-bottom:1px solid #d6d6d6"></div>
<div style="left:360px;top:461px;width:13px;height:14px;background:#fafafa;border-top:1px solid #d6d6d6"><div style="position:absolute;left:2.0px;top:4.5px;width:0;height:0;border-left:4.5px solid transparent;border-right:4.5px solid transparent;border-top:5px solid #555"></div></div>
<div style="left:3px;top:475px;width:372px;height:3px;background:#f0f0f0"></div>
<div style="left:3px;top:475.3px;width:372px;height:1px;background:#c4c4c4"></div>
<div class="hdr" style="left:2px;top:478.3px;width:373px;height:19px"><div style="left:4.5px;top:4.699999999999989px;width:0;height:0;border-top:3px solid transparent;border-bottom:3px solid transparent;border-left:5.6px solid #a0a0a0"></div><div class="t" style="left:41.30000000000001px;width:300px;text-align:center;top:1.15px;color:#8c8c8c"><u>I</u>mage</div></div>
<div class="hdr" style="left:2px;top:497px;width:373px;height:18.5px"><div style="left:4.9px;top:4.600000000000023px;width:0;height:0;border-left:3.2px solid transparent;border-right:3.2px solid transparent;border-top:5.8px solid #000"></div><div class="t" style="left:41.599999999999994px;width:300px;text-align:center;top:1.70px;color:#000"><u>L</u>ine</div></div>
<div class="t" style="left:9.6px;top:529.89px;font-size:11px;line-height:14px;"><u>B</u>asepoint:</div>
<div class="combo" style="left:191.8px;top:525.5px;width:175.2px;height:21px"><div class="t" style="left:3.5px;top:3.0px;color:#8c8c8c">Left Point</div><div style="position:absolute;left:159.7px;top:7.25px;width:0;height:0;border-left:4.0px solid transparent;border-right:4.0px solid transparent;border-top:4.5px solid #a8a8a8"></div></div>
<div class="t" style="left:9.6px;top:557.99px;font-size:11px;line-height:14px;">T<u>y</u>pe of Line:</div>
<div class="combo" style="left:191.8px;top:553.7px;width:175.2px;height:21px"><div style="left:7.5px;top:9.5px;width:71.5px;height:3px;background:#111"></div><div style="position:absolute;left:159.7px;top:7.25px;width:0;height:0;border-left:4.0px solid transparent;border-right:4.0px solid transparent;border-top:4.5px solid #505050"></div></div>
<div class="t" style="left:9.6px;top:580.69px;font-size:11px;line-height:14px;">Start Arrow:</div>
<div class="t" style="left:191.5px;top:580.69px;font-size:11px;line-height:14px;">End Arrow:</div>
<div class="combo" style="left:10.3px;top:600.3px;width:175.3px;height:29px"><div class="t" style="left:4px;top:7.0px;color:#8c8c8c">None</div><div style="position:absolute;left:159.8px;top:11.25px;width:0;height:0;border-left:4.0px solid transparent;border-right:4.0px solid transparent;border-top:4.5px solid #a8a8a8"></div></div>
<div class="combo" style="left:191.8px;top:600.7px;width:175.2px;height:29px"><div class="t" style="left:3.5px;top:7.0px;color:#8c8c8c">None</div><div style="position:absolute;left:159.7px;top:11.25px;width:0;height:0;border-left:4.0px solid transparent;border-right:4.0px solid transparent;border-top:4.5px solid #a8a8a8"></div></div>
<div class="t" style="left:9.6px;top:640.89px;font-size:11px;line-height:14px;">Scaling:</div>
<div class="spin" style="left:101px;top:637.5px;width:84.5px;height:19.5px;background:#f0f0f0"><div class="t" style="left:6.5px;top:2.25px;color:#8c8c8c">1 %</div><div style="position:absolute;right:0;top:0;bottom:0;width:14px;border-left:1px solid #c6c6c6;background:#f0f0f0"><div style="position:absolute;left:2.5px;top:3.0px;width:0;height:0;border-left:4.0px solid transparent;border-right:4.0px solid transparent;border-bottom:4.5px solid #b0b0b0"></div><div style="position:absolute;left:2.5px;top:11.0px;width:0;height:0;border-left:4.0px solid transparent;border-right:4.0px solid transparent;border-top:4.5px solid #b0b0b0"></div></div></div>
<div class="t" style="left:191.5px;top:640.89px;font-size:11px;line-height:14px;">Scaling:</div>
<div class="spin" style="left:281.8px;top:637.5px;width:85px;height:19.5px;background:#f0f0f0"><div class="t" style="left:6px;top:2.25px;color:#8c8c8c">1 %</div><div style="position:absolute;right:0;top:0;bottom:0;width:14px;border-left:1px solid #c6c6c6;background:#f0f0f0"><div style="position:absolute;left:2.5px;top:3.0px;width:0;height:0;border-left:4.0px solid transparent;border-right:4.0px solid transparent;border-bottom:4.5px solid #b0b0b0"></div><div style="position:absolute;left:2.5px;top:11.0px;width:0;height:0;border-left:4.0px solid transparent;border-right:4.0px solid transparent;border-top:4.5px solid #b0b0b0"></div></div></div>
<div class="t" style="left:9.6px;top:669.69px;font-size:11px;line-height:14px;">Line <u>W</u>idth:</div>
<div class="spin" style="left:191.8px;top:666.3px;width:175.2px;height:20.5px;background:#fff"><div class="t" style="left:5.5px;top:2.75px;color:#000">1,00 pt</div><div style="position:absolute;right:0;top:0;bottom:0;width:14px;border-left:1px solid #c6c6c6;background:#fff"><div style="position:absolute;left:2.5px;top:3.5px;width:0;height:0;border-left:4.0px solid transparent;border-right:4.0px solid transparent;border-bottom:4.5px solid #505050"></div><div style="position:absolute;left:2.5px;top:11.5px;width:0;height:0;border-left:4.0px solid transparent;border-right:4.0px solid transparent;border-top:4.5px solid #505050"></div></div></div>
<div class="t" style="left:9.6px;top:700.19px;font-size:11px;line-height:14px;">Ed<u>g</u>es:</div>
<div class="combo" style="left:191.8px;top:694.5px;width:175.2px;height:23px"><svg style="left:6px;top:4px" width="14" height="15"><path d="M0.5 14.5 V0.5 H14 V3.3 H3.3 V14.5 Z" fill="#2b2b2b"/><path d="M5.2 14.5 V5.2 H14 V8 H8 V14.5 Z" fill="#2b2b2b"/></svg><div class="t" style="left:23.5px;top:4.0px;color:#000">Mitre Join</div><div style="position:absolute;left:159.7px;top:8.25px;width:0;height:0;border-left:4.0px solid transparent;border-right:4.0px solid transparent;border-top:4.5px solid #505050"></div></div>
<div class="t" style="left:9.6px;top:730.19px;font-size:11px;line-height:14px;"><u>E</u>ndings:</div>
<div class="combo" style="left:191.8px;top:724.5px;width:175.2px;height:23px"><svg style="left:8px;top:5px" width="12" height="13"><path d="M0 12.5 V0 H11.5 V12.5 H7.5 V3 H4 V12.5 Z" fill="#2b2b2b"/></svg><div class="t" style="left:23.5px;top:4.0px;color:#000">Flat Cap</div><div style="position:absolute;left:159.7px;top:8.25px;width:0;height:0;border-left:4.0px solid transparent;border-right:4.0px solid transparent;border-top:4.5px solid #505050"></div></div>
<div style="left:10px;top:754.5px;width:357px;height:88px;background:#fff;border:1px solid #c0c0c0;border-bottom:none"></div>
<div style="left:11px;top:755.3px;width:355.5px;height:36.5px;background:#3399ff"></div>
<div style="left:14px;top:755.3px;width:37.3px;height:36.5px;background:#fff"></div>
<div class="t" style="left:52px;top:767.39px;font-size:11px;line-height:14px;">No Style</div>
<div style="left:0px;top:842.3px;width:378px;height:1px;background:#d0d0d0"></div>
<svg style="left:392px;top:450px" width="5" height="18"><rect x="1.5" y="1" width="1" height="1" fill="#b8b8b8"/><rect x="1.5" y="4" width="1" height="1" fill="#b8b8b8"/><rect x="1.5" y="7" width="1" height="1" fill="#b8b8b8"/><rect x="1.5" y="10" width="1" height="1" fill="#b8b8b8"/><rect x="1.5" y="13" width="1" height="1" fill="#b8b8b8"/><rect x="1.5" y="16" width="1" height="1" fill="#b8b8b8"/></svg>
<div style="left:397px;top:73.8px;width:608.5px;height:30.5px;background:#dedede;border:1px solid #c4c4c4;border-bottom:none;border-radius:2px 2px 0 0"></div>
<div style="left:397px;top:72px;width:305.5px;height:32.3px;background:linear-gradient(#fbfbfb,#f6f6f6);border:1px solid #b9b9b9;border-bottom:none;border-radius:2px 2px 0 0"></div>
<svg style="left:409px;top:78px" width="16" height="16" viewBox="0 0 17 17">
<defs><radialGradient id="sgt1" cx="0.35" cy="0.25" r="0.85"><stop offset="0" stop-color="#6fb4e6"/><stop offset="0.55" stop-color="#2a7cc0"/><stop offset="1" stop-color="#0d4f86"/></radialGradient></defs>
<circle cx="8.2" cy="9.6" r="7.3" fill="url(#sgt1)" stroke="#174a73" stroke-width="0.5"/>
<path d="M8.8 2.6 C5.5 5 4 9.5 4.5 13.8 C6 15.2 7.5 15.8 8.6 15.9 C8 11 8.2 6.5 8.8 2.6 Z" fill="#a9d6f3" opacity="0.85"/>
<path d="M8.3 16.2 L14.6 3.2 L17 5.2 Z" fill="#d9b35a" stroke="#6b4c16" stroke-width="0.55" stroke-linejoin="round"/>
<path d="M14.3 2.5 L15.6 1.6 L17.3 3.4 L16.6 4.8 Z" fill="#8a6420"/>
</svg>
<div class="t" style="left:454.5px;top:81.69px;font-size:11px;line-height:14px;">C:\Users\steaz\Desktop\brochure.sla*</div>
<svg style="left:671.5px;top:81.5px" width="14" height="13"><path d="M2.2 1.3 C5 4 8.5 7.5 11.8 11.3" stroke="#111" stroke-width="2.4" fill="none" stroke-linecap="round"/><path d="M11.6 1.5 C8.5 5 5.5 8.5 1.2 11.8" stroke="#111" stroke-width="1.8" fill="none" stroke-linecap="round"/></svg>
<svg style="left:713.5px;top:78.5px" width="16" height="16" viewBox="0 0 17 17">
<defs><radialGradient id="sgt2" cx="0.35" cy="0.25" r="0.85"><stop offset="0" stop-color="#6fb4e6"/><stop offset="0.55" stop-color="#2a7cc0"/><stop offset="1" stop-color="#0d4f86"/></radialGradient></defs>
<circle cx="8.2" cy="9.6" r="7.3" fill="url(#sgt2)" stroke="#174a73" stroke-width="0.5"/>
<path d="M8.8 2.6 C5.5 5 4 9.5 4.5 13.8 C6 15.2 7.5 15.8 8.6 15.9 C8 11 8.2 6.5 8.8 2.6 Z" fill="#a9d6f3" opacity="0.85"/>
<path d="M8.3 16.2 L14.6 3.2 L17 5.2 Z" fill="#d9b35a" stroke="#6b4c16" stroke-width="0.55" stroke-linejoin="round"/>
<path d="M14.3 2.5 L15.6 1.6 L17.3 3.4 L16.6 4.8 Z" fill="#8a6420"/>
</svg>
<div class="t" style="left:819px;top:82.39px;font-size:11px;line-height:14px;">Document-1*</div>
<svg style="left:976px;top:82px" width="14" height="13"><path d="M2.2 1.3 C5 4 8.5 7.5 11.8 11.3" stroke="#111" stroke-width="2.4" fill="none" stroke-linecap="round"/><path d="M11.6 1.5 C8.5 5 5.5 8.5 1.2 11.8" stroke="#111" stroke-width="1.8" fill="none" stroke-linecap="round"/></svg>
<div style="left:397px;top:103.8px;width:913px;height:1.2px;background:#b4b4b4"></div>
<div style="left:397px;top:104.5px;width:913px;height:739px;background:#f0f0f0;border-left:1px solid #b6b6b6;border-bottom:1px solid #b6b6b6"></div>
<svg style="left:0;top:0" width="1600" height="900" viewBox="0 0 1600 900" font-family="Liberation Sans"><path d="M411.5 109 V127" stroke="#222" stroke-width="1" stroke-dasharray="1,1"/><path d="M401 118.5 H420" stroke="#222" stroke-width="1" stroke-dasharray="1,1"/><path d="M407.5 118.6 H415.5 M411.5 114.5 V122.5" stroke="#111" stroke-width="1"/><path d="M420.5 118 V122" stroke="#000" stroke-width="1"/><path d="M427.5 118 V122" stroke="#000" stroke-width="1"/><path d="M434.5 118 V122" stroke="#000" stroke-width="1"/><path d="M442.5 118 V122" stroke="#000" stroke-width="1"/><path d="M449.5 118 V122" stroke="#000" stroke-width="1"/><path d="M456.5 118 V122" stroke="#000" stroke-width="1"/><path d="M463.5 118 V122" stroke="#000" stroke-width="1"/><path d="M471.5 118 V122" stroke="#000" stroke-width="1"/><path d="M478.5 113 V122" stroke="#000" stroke-width="1"/><path d="M485.5 118 V122" stroke="#000" stroke-width="1"/><path d="M493.5 118 V122" stroke="#000" stroke-width="1"/><path d="M500.5 118 V122" stroke="#000" stroke-width="1"/><path d="M507.5 118 V122" stroke="#000" stroke-width="1"/><path d="M514.5 118 V122" stroke="#000" stroke-width="1"/><path d="M522.5 118 V122" stroke="#000" stroke-width="1"/><path d="M529.5 118 V122" stroke="#000" stroke-width="1"/><path d="M536.5 118 V122" stroke="#000" stroke-width="1"/><path d="M543.5 118 V122" stroke="#000" stroke-width="1"/><text x="479.8" y="113.8" font-size="8.2" letter-spacing="-0.35" fill="#000">-6400</text><path d="M551.5 113 V122" stroke="#000" stroke-width="1"/><path d="M558.5 118 V122" stroke="#000" stroke-width="1"/><path d="M565.5 118 V122" stroke="#000" stroke-width="1"/><path d="M573.5 118 V122" stroke="#000" stroke-width="1"/><path d="M580.5 118 V122" stroke="#000" stroke-width="1"/><path d="M587.5 118 V122" stroke="#000" stroke-width="1"/><path d="M594.5 118 V122" stroke="#000" stroke-width="1"/><path d="M602.5 118 V122" stroke="#000" stroke-width="1"/><path d="M609.5 118 V122" stroke="#000" stroke-width="1"/><path d="M616.5 118 V122" stroke="#000" stroke-width="1"/><text x="552.8" y="113.8" font-size="8.2" letter-spacing="-0.35" fill="#000">-6200</text><path d="M623.5 113 V122" stroke="#000" stroke-width="1"/><path d="M631.5 118 V122" stroke="#000" stroke-width="1"/><path d="M638.5 118 V122" stroke="#000" stroke-width="1"/><path d="M645.5 118 V122" stroke="#000" stroke-width="1"/><path d="M653.5 118 V122" stroke="#000" stroke-width="1"/><path d="M660.5 118 V122" stroke="#000" stroke-width="1"/><path d="M667.5 118 V122" stroke="#000" stroke-width="1"/><path d="M674.5 118 V122" stroke="#000" stroke-width="1"/><path d="M682.5 118 V122" stroke="#000" stroke-width="1"/><path d="M689.5 118 V122" stroke="#000" stroke-width="1"/><text x="624.8" y="113.8" font-size="8.2" letter-spacing="-0.35" fill="#000">-6000</text><path d="M696.5 113 V122" stroke="#000" stroke-width="1"/><path d="M704.5 118 V122" stroke="#000" stroke-width="1"/><path d="M711.5 118 V122" stroke="#000" stroke-width="1"/><path d="M718.5 118 V122" stroke="#000" stroke-width="1"/><path d="M725.5 118 V122" stroke="#000" stroke-width="1"/><path d="M733.5 118 V122" stroke="#000" stroke-width="1"/><path d="M740.5 118 V122" stroke="#000" stroke-width="1"/><path d="M747.5 118 V122" stroke="#000" stroke-width="1"/><path d="M754.5 118 V122" stroke="#000" stroke-width="1"/><path d="M762.5 118 V122" stroke="#000" stroke-width="1"/><text x="697.8" y="113.8" font-size="8.2" letter-spacing="-0.35" fill="#000">-5800</text><path d="M769.5 113 V122" stroke="#000" stroke-width="1"/><path d="M776.5 118 V122" stroke="#000" stroke-width="1"/><path d="M784.5 118 V122" stroke="#000" stroke-width="1"/><path d="M791.5 118 V122" stroke="#000" stroke-width="1"/><path d="M798.5 118 V122" stroke="#000" stroke-width="1"/><path d="M805.5 118 V122" stroke="#000" stroke-width="1"/><path d="M813.5 118 V122" stroke="#000" stroke-width="1"/><path d="M820.5 118 V122" stroke="#000" stroke-width="1"/><path d="M827.5 118 V122" stroke="#000" stroke-width="1"/><path d="M834.5 118 V122" stroke="#000" stroke-width="1"/><text x="770.8" y="113.8" font-size="8.2" letter-spacing="-0.35" fill="#000">-5600</text><path d="M842.5 113 V122" stroke="#000" stroke-width="1"/><path d="M849.5 118 V122" stroke="#000" stroke-width="1"/><path d="M856.5 118 V122" stroke="#000" stroke-width="1"/><path d="M864.5 118 V122" stroke="#000" stroke-width="1"/><path d="M871.5 118 V122" stroke="#000" stroke-width="1"/><path d="M878.5 118 V122" stroke="#000" stroke-width="1"/><path d="M885.5 118 V122" stroke="#000" stroke-width="1"/><path d="M893.5 118 V122" stroke="#000" stroke-width="1"/><path d="M900.5 118 V122" stroke="#000" stroke-width="1"/><path d="M907.5 118 V122" stroke="#000" stroke-width="1"/><text x="843.8" y="113.8" font-size="8.2" letter-spacing="-0.35" fill="#000">-5400</text><path d="M915.5 113 V122" stroke="#000" stroke-width="1"/><path d="M922.5 118 V122" stroke="#000" stroke-width="1"/><path d="M929.5 118 V122" stroke="#000" stroke-width="1"/><path d="M936.5 118 V122" stroke="#000" stroke-width="1"/><path d="M944.5 118 V122" stroke="#000" stroke-width="1"/><path d="M951.5 118 V122" stroke="#000" stroke-width="1"/><path d="M958.5 118 V122" stroke="#000" stroke-width="1"/><path d="M965.5 118 V122" stroke="#000" stroke-width="1"/><path d="M973.5 118 V122" stroke="#000" stroke-width="1"/><path d="M980.5 118 V122" stroke="#000" stroke-width="1"/><text x="915.8" y="113.8" font-size="8.2" letter-spacing="-0.35" fill="#000">-5200</text><path d="M987.5 113 V122" stroke="#000" stroke-width="1"/><path d="M995.5 118 V122" stroke="#000" stroke-width="1"/><path d="M1002.5 118 V122" stroke="#000" stroke-width="1"/><path d="M1009.5 118 V122" stroke="#000" stroke-width="1"/><path d="M1016.5 118 V122" stroke="#000" stroke-width="1"/><path d="M1024.5 118 V122" stroke="#000" stroke-width="1"/><path d="M1031.5 118 V122" stroke="#000" stroke-width="1"/><path d="M1038.5 118 V122" stroke="#000" stroke-width="1"/><path d="M1045.5 118 V122" stroke="#000" stroke-width="1"/><path d="M1053.5 118 V122" stroke="#000" stroke-width="1"/><text x="988.8" y="113.8" font-size="8.2" letter-spacing="-0.35" fill="#000">-5000</text><path d="M1060.5 113 V122" stroke="#000" stroke-width="1"/><path d="M1067.5 118 V122" stroke="#000" stroke-width="1"/><path d="M1075.5 118 V122" stroke="#000" stroke-width="1"/><path d="M1082.5 118 V122" stroke="#000" stroke-width="1"/><path d="M1089.5 118 V122" stroke="#000" stroke-width="1"/><path d="M1096.5 118 V122" stroke="#000" stroke-width="1"/><path d="M1104.5 118 V122" stroke="#000" stroke-width="1"/><path d="M1111.5 118 V122" stroke="#000" stroke-width="1"/><path d="M1118.5 118 V122" stroke="#000" stroke-width="1"/><path d="M1126.5 118 V122" stroke="#000" stroke-width="1"/><text x="1061.8" y="113.8" font-size="8.2" letter-spacing="-0.35" fill="#000">-4800</text><path d="M1133.5 113 V122" stroke="#000" stroke-width="1"/><path d="M1140.5 118 V122" stroke="#000" stroke-width="1"/><path d="M1147.5 118 V122" stroke="#000" stroke-width="1"/><path d="M1155.5 118 V122" stroke="#000" stroke-width="1"/><path d="M1162.5 118 V122" stroke="#000" stroke-width="1"/><path d="M1169.5 118 V122" stroke="#000" stroke-width="1"/><path d="M1176.5 118 V122" stroke="#000" stroke-width="1"/><path d="M1184.5 118 V122" stroke="#000" stroke-width="1"/><path d="M1191.5 118 V122" stroke="#000" stroke-width="1"/><path d="M1198.5 118 V122" stroke="#000" stroke-width="1"/><text x="1134.8" y="113.8" font-size="8.2" letter-spacing="-0.35" fill="#000">-4600</text><path d="M1206.5 113 V122" stroke="#000" stroke-width="1"/><path d="M1213.5 118 V122" stroke="#000" stroke-width="1"/><path d="M1220.5 118 V122" stroke="#000" stroke-width="1"/><path d="M1227.5 118 V122" stroke="#000" stroke-width="1"/><path d="M1235.5 118 V122" stroke="#000" stroke-width="1"/><path d="M1242.5 118 V122" stroke="#000" stroke-width="1"/><path d="M1249.5 118 V122" stroke="#000" stroke-width="1"/><path d="M1256.5 118 V122" stroke="#000" stroke-width="1"/><path d="M1264.5 118 V122" stroke="#000" stroke-width="1"/><path d="M1271.5 118 V122" stroke="#000" stroke-width="1"/><text x="1207.8" y="113.8" font-size="8.2" letter-spacing="-0.35" fill="#000">-4400</text><path d="M1278.5 113 V122" stroke="#000" stroke-width="1"/><path d="M1286.5 118 V122" stroke="#000" stroke-width="1"/><path d="M1293.5 118 V122" stroke="#000" stroke-width="1"/><text x="1279.8" y="113.8" font-size="8.2" letter-spacing="-0.35" fill="#000">-4200</text><path d="M411 123.5 H415" stroke="#000" stroke-width="1"/><path d="M411 127.5 H415" stroke="#000" stroke-width="1"/><path d="M411 130.5 H415" stroke="#000" stroke-width="1"/><path d="M411 134.5 H415" stroke="#000" stroke-width="1"/><path d="M411 138.5 H415" stroke="#000" stroke-width="1"/><path d="M411 141.5 H415" stroke="#000" stroke-width="1"/><path d="M406 145.5 H415" stroke="#000" stroke-width="1"/><path d="M411 148.5 H415" stroke="#000" stroke-width="1"/><path d="M411 152.5 H415" stroke="#000" stroke-width="1"/><path d="M411 156.5 H415" stroke="#000" stroke-width="1"/><path d="M411 159.5 H415" stroke="#000" stroke-width="1"/><path d="M411 163.5 H415" stroke="#000" stroke-width="1"/><path d="M411 167.5 H415" stroke="#000" stroke-width="1"/><path d="M411 170.5 H415" stroke="#000" stroke-width="1"/><path d="M411 174.5 H415" stroke="#000" stroke-width="1"/><path d="M411 178.5 H415" stroke="#000" stroke-width="1"/><rect x="400.3" y="151.0" width="1.2" height="2" fill="#222"/><text x="399" y="162.5" font-size="8.3" fill="#000">1</text><text x="399" y="170.5" font-size="8.3" fill="#000">0</text><text x="399" y="178.5" font-size="8.3" fill="#000">0</text><text x="399" y="186.5" font-size="8.3" fill="#000">0</text><path d="M406 181.5 H415" stroke="#000" stroke-width="1"/><path d="M411 185.5 H415" stroke="#000" stroke-width="1"/><path d="M411 189.5 H415" stroke="#000" stroke-width="1"/><path d="M411 192.5 H415" stroke="#000" stroke-width="1"/><path d="M411 196.5 H415" stroke="#000" stroke-width="1"/><path d="M411 199.5 H415" stroke="#000" stroke-width="1"/><path d="M411 203.5 H415" stroke="#000" stroke-width="1"/><path d="M411 207.5 H415" stroke="#000" stroke-width="1"/><path d="M411 210.5 H415" stroke="#000" stroke-width="1"/><path d="M411 214.5 H415" stroke="#000" stroke-width="1"/><rect x="400.3" y="187.4" width="1.2" height="2" fill="#222"/><text x="399" y="198.9" font-size="8.3" fill="#000">9</text><text x="399" y="206.9" font-size="8.3" fill="#000">0</text><text x="399" y="214.9" font-size="8.3" fill="#000">0</text><path d="M406 218.5 H415" stroke="#000" stroke-width="1"/><path d="M411 221.5 H415" stroke="#000" stroke-width="1"/><path d="M411 225.5 H415" stroke="#000" stroke-width="1"/><path d="M411 229.5 H415" stroke="#000" stroke-width="1"/><path d="M411 232.5 H415" stroke="#000" stroke-width="1"/><path d="M411 236.5 H415" stroke="#000" stroke-width="1"/><path d="M411 240.5 H415" stroke="#000" stroke-width="1"/><path d="M411 243.5 H415" stroke="#000" stroke-width="1"/><path d="M411 247.5 H415" stroke="#000" stroke-width="1"/><path d="M411 251.5 H415" stroke="#000" stroke-width="1"/><rect x="400.3" y="223.9" width="1.2" height="2" fill="#222"/><text x="399" y="235.4" font-size="8.3" fill="#000">8</text><text x="399" y="243.4" font-size="8.3" fill="#000">0</text><text x="399" y="251.4" font-size="8.3" fill="#000">0</text><path d="M406 254.5 H415" stroke="#000" stroke-width="1"/><path d="M411 258.5 H415" stroke="#000" stroke-width="1"/><path d="M411 261.5 H415" stroke="#000" stroke-width="1"/><path d="M411 265.5 H415" stroke="#000" stroke-width="1"/><path d="M411 269.5 H415" stroke="#000" stroke-width="1"/><path d="M411 272.5 H415" stroke="#000" stroke-width="1"/><path d="M411 276.5 H415" stroke="#000" stroke-width="1"/><path d="M411 280.5 H415" stroke="#000" stroke-width="1"/><path d="M411 283.5 H415" stroke="#000" stroke-width="1"/><path d="M411 287.5 H415" stroke="#000" stroke-width="1"/><rect x="400.3" y="260.3" width="1.2" height="2" fill="#222"/><text x="399" y="271.8" font-size="8.3" fill="#000">7</text><text x="399" y="279.8" font-size="8.3" fill="#000">0</text><text x="399" y="287.8" font-size="8.3" fill="#000">0</text><path d="M406 291.5 H415" stroke="#000" stroke-width="1"/><path d="M411 294.5 H415" stroke="#000" stroke-width="1"/><path d="M411 298.5 H415" stroke="#000" stroke-width="1"/><path d="M411 302.5 H415" stroke="#000" stroke-width="1"/><path d="M411 305.5 H415" stroke="#000" stroke-width="1"/><path d="M411 309.5 H415" stroke="#000" stroke-width="1"/><path d="M411 312.5 H415" stroke="#000" stroke-width="1"/><path d="M411 316.5 H415" stroke="#000" stroke-width="1"/><path d="M411 320.5 H415" stroke="#000" stroke-width="1"/><path d="M411 323.5 H415" stroke="#000" stroke-width="1"/><rect x="400.3" y="296.8" width="1.2" height="2" fill="#222"/><text x="399" y="308.3" font-size="8.3" fill="#000">6</text><text x="399" y="316.3" font-size="8.3" fill="#000">0</text><text x="399" y="324.3" font-size="8.3" fill="#000">0</text><path d="M406 327.5 H415" stroke="#000" stroke-width="1"/><path d="M411 331.5 H415" stroke="#000" stroke-width="1"/><path d="M411 334.5 H415" stroke="#000" stroke-width="1"/><path d="M411 338.5 H415" stroke="#000" stroke-width="1"/><path d="M411 342.5 H415" stroke="#000" stroke-width="1"/><path d="M411 345.5 H415" stroke="#000" stroke-width="1"/><path d="M411 349.5 H415" stroke="#000" stroke-width="1"/><path d="M411 353.5 H415" stroke="#000" stroke-width="1"/><path d="M411 356.5 H415" stroke="#000" stroke-width="1"/><path d="M411 360.5 H415" stroke="#000" stroke-width="1"/><rect x="400.3" y="333.2" width="1.2" height="2" fill="#222"/><text x="399" y="344.8" font-size="8.3" fill="#000">5</text><text x="399" y="352.8" font-size="8.3" fill="#000">0</text><text x="399" y="360.8" font-size="8.3" fill="#000">0</text><path d="M406 364.5 H415" stroke="#000" stroke-width="1"/><path d="M411 367.5 H415" stroke="#000" stroke-width="1"/><path d="M411 371.5 H415" stroke="#000" stroke-width="1"/><path d="M411 374.5 H415" stroke="#000" stroke-width="1"/><path d="M411 378.5 H415" stroke="#000" stroke-width="1"/><path d="M411 382.5 H415" stroke="#000" stroke-width="1"/><path d="M411 385.5 H415" stroke="#000" stroke-width="1"/><path d="M411 389.5 H415" stroke="#000" stroke-width="1"/><path d="M411 393.5 H415" stroke="#000" stroke-width="1"/><path d="M411 396.5 H415" stroke="#000" stroke-width="1"/><rect x="400.3" y="369.7" width="1.2" height="2" fill="#222"/><text x="399" y="381.2" font-size="8.3" fill="#000">4</text><text x="399" y="389.2" font-size="8.3" fill="#000">0</text><text x="399" y="397.2" font-size="8.3" fill="#000">0</text><path d="M406 400.5 H415" stroke="#000" stroke-width="1"/><path d="M411 404.5 H415" stroke="#000" stroke-width="1"/><path d="M411 407.5 H415" stroke="#000" stroke-width="1"/><path d="M411 411.5 H415" stroke="#000" stroke-width="1"/><path d="M411 415.5 H415" stroke="#000" stroke-width="1"/><path d="M411 418.5 H415" stroke="#000" stroke-width="1"/><path d="M411 422.5 H415" stroke="#000" stroke-width="1"/><path d="M411 425.5 H415" stroke="#000" stroke-width="1"/><path d="M411 429.5 H415" stroke="#000" stroke-width="1"/><path d="M411 433.5 H415" stroke="#000" stroke-width="1"/><rect x="400.3" y="406.1" width="1.2" height="2" fill="#222"/><text x="399" y="417.6" font-size="8.3" fill="#000">3</text><text x="399" y="425.6" font-size="8.3" fill="#000">0</text><text x="399" y="433.6" font-size="8.3" fill="#000">0</text><path d="M406 436.5 H415" stroke="#000" stroke-width="1"/><path d="M411 440.5 H415" stroke="#000" stroke-width="1"/><path d="M411 444.5 H415" stroke="#000" stroke-width="1"/><path d="M411 447.5 H415" stroke="#000" stroke-width="1"/><path d="M411 451.5 H415" stroke="#000" stroke-width="1"/><path d="M411 455.5 H415" stroke="#000" stroke-width="1"/><path d="M411 458.5 H415" stroke="#000" stroke-width="1"/><path d="M411 462.5 H415" stroke="#000" stroke-width="1"/><path d="M411 466.5 H415" stroke="#000" stroke-width="1"/><path d="M411 469.5 H415" stroke="#000" stroke-width="1"/><rect x="400.3" y="442.6" width="1.2" height="2" fill="#222"/><text x="399" y="454.1" font-size="8.3" fill="#000">2</text><text x="399" y="462.1" font-size="8.3" fill="#000">0</text><text x="399" y="470.1" font-size="8.3" fill="#000">0</text><path d="M406 473.5 H415" stroke="#000" stroke-width="1"/><path d="M411 476.5 H415" stroke="#000" stroke-width="1"/><path d="M411 480.5 H415" stroke="#000" stroke-width="1"/><path d="M411 484.5 H415" stroke="#000" stroke-width="1"/><path d="M411 487.5 H415" stroke="#000" stroke-width="1"/><path d="M411 491.5 H415" stroke="#000" stroke-width="1"/><path d="M411 495.5 H415" stroke="#000" stroke-width="1"/><path d="M411 498.5 H415" stroke="#000" stroke-width="1"/><path d="M411 502.5 H415" stroke="#000" stroke-width="1"/><path d="M411 506.5 H415" stroke="#000" stroke-width="1"/><rect x="400.3" y="479.1" width="1.2" height="2" fill="#222"/><text x="399" y="490.6" font-size="8.3" fill="#000">1</text><text x="399" y="498.6" font-size="8.3" fill="#000">0</text><text x="399" y="506.6" font-size="8.3" fill="#000">0</text><path d="M406 509.5 H415" stroke="#000" stroke-width="1"/><path d="M411 513.5 H415" stroke="#000" stroke-width="1"/><path d="M411 517.5 H415" stroke="#000" stroke-width="1"/><path d="M411 520.5 H415" stroke="#000" stroke-width="1"/><path d="M411 524.5 H415" stroke="#000" stroke-width="1"/><path d="M411 528.5 H415" stroke="#000" stroke-width="1"/><path d="M411 531.5 H415" stroke="#000" stroke-width="1"/><path d="M411 535.5 H415" stroke="#000" stroke-width="1"/><path d="M411 538.5 H415" stroke="#000" stroke-width="1"/><path d="M411 542.5 H415" stroke="#000" stroke-width="1"/><text x="399" y="519.0" font-size="8.3" fill="#000">0</text><path d="M406 546.5 H415" stroke="#000" stroke-width="1"/><path d="M411 549.5 H415" stroke="#000" stroke-width="1"/><path d="M411 553.5 H415" stroke="#000" stroke-width="1"/><path d="M411 557.5 H415" stroke="#000" stroke-width="1"/><path d="M411 560.5 H415" stroke="#000" stroke-width="1"/><path d="M411 564.5 H415" stroke="#000" stroke-width="1"/><path d="M411 568.5 H415" stroke="#000" stroke-width="1"/><path d="M411 571.5 H415" stroke="#000" stroke-width="1"/><path d="M411 575.5 H415" stroke="#000" stroke-width="1"/><path d="M411 579.5 H415" stroke="#000" stroke-width="1"/><text x="399" y="555.5" font-size="8.3" fill="#000">1</text><text x="399" y="563.5" font-size="8.3" fill="#000">0</text><text x="399" y="571.5" font-size="8.3" fill="#000">0</text><path d="M406 582.5 H415" stroke="#000" stroke-width="1"/><path d="M411 586.5 H415" stroke="#000" stroke-width="1"/><path d="M411 589.5 H415" stroke="#000" stroke-width="1"/><path d="M411 593.5 H415" stroke="#000" stroke-width="1"/><path d="M411 597.5 H415" stroke="#000" stroke-width="1"/><path d="M411 600.5 H415" stroke="#000" stroke-width="1"/><path d="M411 604.5 H415" stroke="#000" stroke-width="1"/><path d="M411 608.5 H415" stroke="#000" stroke-width="1"/><path d="M411 611.5 H415" stroke="#000" stroke-width="1"/><path d="M411 615.5 H415" stroke="#000" stroke-width="1"/><text x="399" y="591.9" font-size="8.3" fill="#000">2</text><text x="399" y="599.9" font-size="8.3" fill="#000">0</text><text x="399" y="607.9" font-size="8.3" fill="#000">0</text><path d="M406 619.5 H415" stroke="#000" stroke-width="1"/><path d="M411 622.5 H415" stroke="#000" stroke-width="1"/><path d="M411 626.5 H415" stroke="#000" stroke-width="1"/><path d="M411 630.5 H415" stroke="#000" stroke-width="1"/><path d="M411 633.5 H415" stroke="#000" stroke-width="1"/><path d="M411 637.5 H415" stroke="#000" stroke-width="1"/><path d="M411 641.5 H415" stroke="#000" stroke-width="1"/><path d="M411 644.5 H415" stroke="#000" stroke-width="1"/><path d="M411 648.5 H415" stroke="#000" stroke-width="1"/><path d="M411 651.5 H415" stroke="#000" stroke-width="1"/><text x="399" y="628.4" font-size="8.3" fill="#000">3</text><text x="399" y="636.4" font-size="8.3" fill="#000">0</text><text x="399" y="644.4" font-size="8.3" fill="#000">0</text><path d="M406 655.5 H415" stroke="#000" stroke-width="1"/><path d="M411 659.5 H415" stroke="#000" stroke-width="1"/><path d="M411 662.5 H415" stroke="#000" stroke-width="1"/><path d="M411 666.5 H415" stroke="#000" stroke-width="1"/><path d="M411 670.5 H415" stroke="#000" stroke-width="1"/><path d="M411 673.5 H415" stroke="#000" stroke-width="1"/><path d="M411 677.5 H415" stroke="#000" stroke-width="1"/><path d="M411 681.5 H415" stroke="#000" stroke-width="1"/><path d="M411 684.5 H415" stroke="#000" stroke-width="1"/><path d="M411 688.5 H415" stroke="#000" stroke-width="1"/><text x="399" y="664.8" font-size="8.3" fill="#000">4</text><text x="399" y="672.8" font-size="8.3" fill="#000">0</text><text x="399" y="680.8" font-size="8.3" fill="#000">0</text><path d="M406 692.5 H415" stroke="#000" stroke-width="1"/><path d="M411 695.5 H415" stroke="#000" stroke-width="1"/><path d="M411 699.5 H415" stroke="#000" stroke-width="1"/><path d="M411 702.5 H415" stroke="#000" stroke-width="1"/><path d="M411 706.5 H415" stroke="#000" stroke-width="1"/><path d="M411 710.5 H415" stroke="#000" stroke-width="1"/><path d="M411 713.5 H415" stroke="#000" stroke-width="1"/><path d="M411 717.5 H415" stroke="#000" stroke-width="1"/><path d="M411 721.5 H415" stroke="#000" stroke-width="1"/><path d="M411 724.5 H415" stroke="#000" stroke-width="1"/><text x="399" y="701.2" font-size="8.3" fill="#000">5</text><text x="399" y="709.2" font-size="8.3" fill="#000">0</text><text x="399" y="717.2" font-size="8.3" fill="#000">0</text><path d="M406 728.5 H415" stroke="#000" stroke-width="1"/><path d="M411 732.5 H415" stroke="#000" stroke-width="1"/><path d="M411 735.5 H415" stroke="#000" stroke-width="1"/><path d="M411 739.5 H415" stroke="#000" stroke-width="1"/><path d="M411 743.5 H415" stroke="#000" stroke-width="1"/><path d="M411 746.5 H415" stroke="#000" stroke-width="1"/><path d="M411 750.5 H415" stroke="#000" stroke-width="1"/><path d="M411 754.5 H415" stroke="#000" stroke-width="1"/><path d="M411 757.5 H415" stroke="#000" stroke-width="1"/><path d="M411 761.5 H415" stroke="#000" stroke-width="1"/><text x="399" y="737.7" font-size="8.3" fill="#000">6</text><text x="399" y="745.7" font-size="8.3" fill="#000">0</text><text x="399" y="753.7" font-size="8.3" fill="#000">0</text><path d="M406 764.5 H415" stroke="#000" stroke-width="1"/><path d="M411 768.5 H415" stroke="#000" stroke-width="1"/><path d="M411 772.5 H415" stroke="#000" stroke-width="1"/><path d="M411 775.5 H415" stroke="#000" stroke-width="1"/><path d="M411 779.5 H415" stroke="#000" stroke-width="1"/><path d="M411 783.5 H415" stroke="#000" stroke-width="1"/><path d="M411 786.5 H415" stroke="#000" stroke-width="1"/><path d="M411 790.5 H415" stroke="#000" stroke-width="1"/><path d="M411 794.5 H415" stroke="#000" stroke-width="1"/><path d="M411 797.5 H415" stroke="#000" stroke-width="1"/><text x="399" y="774.2" font-size="8.3" fill="#000">7</text><text x="399" y="782.2" font-size="8.3" fill="#000">0</text><text x="399" y="790.2" font-size="8.3" fill="#000">0</text><path d="M406 801.5 H415" stroke="#000" stroke-width="1"/><path d="M411 805.5 H415" stroke="#000" stroke-width="1"/><path d="M411 808.5 H415" stroke="#000" stroke-width="1"/><path d="M411 812.5 H415" stroke="#000" stroke-width="1"/><path d="M411 815.5 H415" stroke="#000" stroke-width="1"/><path d="M411 819.5 H415" stroke="#000" stroke-width="1"/><path d="M411 823.5 H415" stroke="#000" stroke-width="1"/><path d="M411 826.5 H415" stroke="#000" stroke-width="1"/><text x="399" y="810.6" font-size="8.3" fill="#000">8</text><text x="399" y="818.6" font-size="8.3" fill="#000">0</text><text x="399" y="826.6" font-size="8.3" fill="#000">0</text></svg>
<div style="left:1296.5px;top:104.5px;width:14px;height:724px;background:#e8e8e8;border:1px solid #cfcfcf"></div>
<div style="left:1297px;top:105px;width:13px;height:13.5px;background:#fafafa;border-bottom:1px solid #d6d6d6"><div style="position:absolute;left:2.5px;top:4.25px;width:0;height:0;border-left:4.0px solid transparent;border-right:4.0px solid transparent;border-bottom:4.5px solid #555"></div></div>
<div style="left:1297px;top:129.7px;width:13px;height:690px;background:#fbfbfb;border-top:1px solid #d6d6d6"></div>
<div style="left:1297px;top:814.5px;width:13px;height:14px;background:#fafafa;border-top:1px solid #d6d6d6"><div style="position:absolute;left:2.5px;top:4.55px;width:0;height:0;border-left:4.0px solid transparent;border-right:4.0px solid transparent;border-top:4.5px solid #555"></div></div>
<div style="left:397.5px;top:828.3px;width:913px;height:14.5px;background:#e8e8e8;border:1px solid #c4c4c4"></div>
<div style="left:398px;top:829px;width:13.5px;height:13px;background:#fafafa;border-right:1px solid #d6d6d6"><div style="left:4px;top:2.5px;width:0;height:0;border-top:4px solid transparent;border-bottom:4px solid transparent;border-left:none;border-right:4.5px solid #555"></div></div>
<div style="left:1000.3px;top:829px;width:282.5px;height:13px;background:linear-gradient(#fdfdfd,#f6f6f6);border-left:1px solid #c6c6c6"></div>
<div style="left:1282.5px;top:829px;width:14px;height:13px;background:#fafafa;border-left:1px solid #d6d6d6"><div style="left:4.5px;top:2.5px;width:0;height:0;border-top:4px solid transparent;border-bottom:4px solid transparent;border-left:4.5px solid #555"></div></div>
<div style="left:1296.5px;top:828.3px;width:14px;height:14.5px;background:#f0f0f0;border:1px solid #c8c8c8"></div>
<div class="t" style="left:1320px;top:75.09px;font-size:11px;line-height:14px;">Layers</div>
<svg style="left:1572px;top:75px" width="28" height="14">
<rect x="1.5" y="1.5" width="10.5" height="10.5" rx="2" fill="none" stroke="#7a7a7a" stroke-width="1"/>
<rect x="4" y="5.5" width="4.5" height="4" fill="none" stroke="#555" stroke-width="1"/><path d="M6 5.5 V3.5 H10 V7.5 H8.5" fill="none" stroke="#555" stroke-width="1"/>
<rect x="15.5" y="1.5" width="10.5" height="10.5" rx="2" fill="none" stroke="#7a7a7a" stroke-width="1"/>
<path d="M18 4 L23.5 9.5 M23.5 4 L18 9.5" stroke="#444" stroke-width="1.8"/>
</svg>
<div class="t" style="left:1318.6px;top:97.59px;font-size:11px;line-height:14px;letter-spacing:-0.45px">Blend Mode:</div>
<div class="combo" style="left:1380.4px;top:93.4px;width:92.6px;height:21px"><div class="t" style="left:3.5px;top:3.0px;color:#000">Normal</div><div style="position:absolute;left:77.1px;top:7.25px;width:0;height:0;border-left:4.0px solid transparent;border-right:4.0px solid transparent;border-top:4.5px solid #505050"></div></div>
<div class="t" style="left:1475.7px;top:97.59px;font-size:11px;line-height:14px;letter-spacing:-0.2px">Opacity:</div>
<div class="spin" style="left:1535.5px;top:94px;width:62px;height:21px;background:#fff"><div class="t" style="left:6px;top:3.0px;color:#000">100 %</div><div style="position:absolute;right:0;top:0;bottom:0;width:14px;border-left:1px solid #c6c6c6;background:#fff"><div style="position:absolute;left:2.5px;top:3.75px;width:0;height:0;border-left:4.0px solid transparent;border-right:4.0px solid transparent;border-bottom:4.5px solid #505050"></div><div style="position:absolute;left:2.5px;top:11.75px;width:0;height:0;border-left:4.0px solid transparent;border-right:4.0px solid transparent;border-top:4.5px solid #505050"></div></div></div>
<div style="left:1319px;top:118.5px;width:278.5px;height:330px;background:#f0f0f0;border:1px solid #c8c8c8"></div>
<div style="left:1320px;top:119.5px;width:277px;height:19px;background:linear-gradient(#fdfdfd,#efefef);border-bottom:1px solid #cdcdcd"></div>
<div style="left:1320px;top:138.5px;width:277px;height:29.5px;background:#fff;border-bottom:1px solid #d9d9d9"></div>
<div style="left:1322.9px;top:147.0px;width:16px;height:12px;background:#00ffff"></div>
<div style="left:1344.1px;top:146.1px;width:13.5px;height:13.5px;background:#fff;border:1px solid #b4b4b4"><svg style="left:1px;top:1px" width="12" height="12"><path d="M2 5.2 L4 8.8 C4.8 6.5 6 3.5 7.6 1.5" stroke="#000" stroke-width="1.7" fill="none" stroke-linejoin="round" stroke-linecap="round"/></svg></div>
<div style="left:1368.3px;top:146.1px;width:13.5px;height:13.5px;background:#fff;border:1px solid #b4b4b4"><svg style="left:1px;top:1px" width="12" height="12"><path d="M2 5.2 L4 8.8 C4.8 6.5 6 3.5 7.6 1.5" stroke="#000" stroke-width="1.7" fill="none" stroke-linejoin="round" stroke-linecap="round"/></svg></div>
<div style="left:1392.3px;top:146.1px;width:13.5px;height:13.5px;background:#fff;border:1px solid #b4b4b4"></div>
<div style="left:1416.3px;top:146.1px;width:13.5px;height:13.5px;background:#fff;border:1px solid #b4b4b4"><svg style="left:1px;top:1px" width="12" height="12"><path d="M2 5.2 L4 8.8 C4.8 6.5 6 3.5 7.6 1.5" stroke="#000" stroke-width="1.7" fill="none" stroke-linejoin="round" stroke-linecap="round"/></svg></div>
<div style="left:1440.3px;top:146.1px;width:13.5px;height:13.5px;background:#fff;border:1px solid #b4b4b4"></div>
<div style="left:1464.5px;top:146.1px;width:13.5px;height:13.5px;background:#fff;border:1px solid #b4b4b4"></div>
<div class="t" style="left:1490px;top:147.49px;font-size:11px;line-height:14px;letter-spacing:-0.6px">LOGOS ICONS</div>
<div style="left:1320px;top:168px;width:277px;height:30.19999999999999px;background:#f2f2f2;border-bottom:1px solid #d9d9d9"></div>
<div style="left:1322.9px;top:176.5px;width:16px;height:12px;background:#0000ff"></div>
<div style="left:1344.1px;top:175.6px;width:13.5px;height:13.5px;background:#fff;border:1px solid #b4b4b4"><svg style="left:1px;top:1px" width="12" height="12"><path d="M2 5.2 L4 8.8 C4.8 6.5 6 3.5 7.6 1.5" stroke="#000" stroke-width="1.7" fill="none" stroke-linejoin="round" stroke-linecap="round"/></svg></div>
<div style="left:1368.3px;top:175.6px;width:13.5px;height:13.5px;background:#fff;border:1px solid #b4b4b4"><svg style="left:1px;top:1px" width="12" height="12"><path d="M2 5.2 L4 8.8 C4.8 6.5 6 3.5 7.6 1.5" stroke="#000" stroke-width="1.7" fill="none" stroke-linejoin="round" stroke-linecap="round"/></svg></div>
<div style="left:1392.3px;top:175.6px;width:13.5px;height:13.5px;background:#fff;border:1px solid #b4b4b4"></div>
<div style="left:1416.3px;top:175.6px;width:13.5px;height:13.5px;background:#fff;border:1px solid #b4b4b4"><svg style="left:1px;top:1px" width="12" height="12"><path d="M2 5.2 L4 8.8 C4.8 6.5 6 3.5 7.6 1.5" stroke="#000" stroke-width="1.7" fill="none" stroke-linejoin="round" stroke-linecap="round"/></svg></div>
<div style="left:1440.3px;top:175.6px;width:13.5px;height:13.5px;background:#fff;border:1px solid #b4b4b4"></div>
<div style="left:1464.5px;top:175.6px;width:13.5px;height:13.5px;background:#fff;border:1px solid #b4b4b4"></div>
<div class="t" style="left:1490px;top:176.99px;font-size:11px;line-height:14px;letter-spacing:-0.6px">TEXTS</div>
<div style="left:1320px;top:198.2px;width:277px;height:30.100000000000023px;background:#fff;border-bottom:1px solid #d9d9d9"></div>
<div style="left:1322.9px;top:206.7px;width:16px;height:12px;background:#ff0000"></div>
<div style="left:1344.1px;top:205.79999999999998px;width:13.5px;height:13.5px;background:#fff;border:1px solid #b4b4b4"><svg style="left:1px;top:1px" width="12" height="12"><path d="M2 5.2 L4 8.8 C4.8 6.5 6 3.5 7.6 1.5" stroke="#000" stroke-width="1.7" fill="none" stroke-linejoin="round" stroke-linecap="round"/></svg></div>
<div style="left:1368.3px;top:205.79999999999998px;width:13.5px;height:13.5px;background:#fff;border:1px solid #b4b4b4"><svg style="left:1px;top:1px" width="12" height="12"><path d="M2 5.2 L4 8.8 C4.8 6.5 6 3.5 7.6 1.5" stroke="#000" stroke-width="1.7" fill="none" stroke-linejoin="round" stroke-linecap="round"/></svg></div>
<div style="left:1392.3px;top:205.79999999999998px;width:13.5px;height:13.5px;background:#fff;border:1px solid #b4b4b4"></div>
<div style="left:1416.3px;top:205.79999999999998px;width:13.5px;height:13.5px;background:#fff;border:1px solid #b4b4b4"><svg style="left:1px;top:1px" width="12" height="12"><path d="M2 5.2 L4 8.8 C4.8 6.5 6 3.5 7.6 1.5" stroke="#000" stroke-width="1.7" fill="none" stroke-linejoin="round" stroke-linecap="round"/></svg></div>
<div style="left:1440.3px;top:205.79999999999998px;width:13.5px;height:13.5px;background:#fff;border:1px solid #b4b4b4"></div>
<div style="left:1464.5px;top:205.79999999999998px;width:13.5px;height:13.5px;background:#fff;border:1px solid #b4b4b4"></div>
<div class="t" style="left:1490px;top:207.19px;font-size:11px;line-height:14px;letter-spacing:-0.6px">graphics</div>
<div style="left:1320px;top:228.3px;width:277px;height:30.599999999999966px;background:#f2f2f2;border-bottom:1px solid #d9d9d9"></div>
<div style="left:1320px;top:258.9px;width:277px;height:29.400000000000034px;background:#fff;border-bottom:1px solid #d9d9d9"></div>
<div style="left:1342.6px;top:119.5px;width:1px;height:169px;background:#d4d4d4"></div>
<div style="left:1366.8px;top:119.5px;width:1px;height:169px;background:#d4d4d4"></div>
<div style="left:1390.8px;top:119.5px;width:1px;height:169px;background:#d4d4d4"></div>
<div style="left:1414.8px;top:119.5px;width:1px;height:169px;background:#d4d4d4"></div>
<div style="left:1438.8px;top:119.5px;width:1px;height:169px;background:#d4d4d4"></div>
<div style="left:1463.0px;top:119.5px;width:1px;height:169px;background:#d4d4d4"></div>
<div style="left:1486.9px;top:119.5px;width:1px;height:169px;background:#d4d4d4"></div>
<div class="t" style="left:1528px;top:122.49px;font-size:11px;line-height:14px;">Name</div>
<svg style="left:0;top:0" width="1600" height="150">
<path d="M1346.5 129 C1349 124 1359.5 124 1362 129 C1359.5 134 1349 134 1346.5 129 Z" fill="#2b2b2b"/><circle cx="1354.2" cy="129" r="2.6" fill="#f8f8f8"/><circle cx="1354.2" cy="129" r="1.3" fill="#2b2b2b"/>
<path d="M1370.2 128.5 H1373.5 V131.2 H1381 V128.5 H1384.2 V134.8 H1370.2 Z" fill="#2b2b2b"/><rect x="1374.3" y="123.1" width="5.8" height="7" fill="#2b2b2b"/>
<rect x="1394.2" y="128.4" width="11.8" height="6.7" fill="#2b2b2b"/><path d="M1396.5 128.4 V126.5 A3.5 3.5 0 0 1 1403.5 126.5" stroke="#2b2b2b" stroke-width="1.2" fill="none"/>
<rect x="1418.3" y="125.4" width="6.2" height="9.6" fill="#2b2b2b"/><path d="M1418.3 123.6 H1432 M1426 126.2 H1432 M1426 128.2 H1432 M1426 130.2 H1432 M1426 132.2 H1432 M1426 134.3 H1432" stroke="#2b2b2b" stroke-width="0.9"/>
<rect x="1442.5" y="122.8" width="13.6" height="13" fill="none" stroke="#2b2b2b" stroke-width="1.2"/><circle cx="1449.3" cy="129.3" r="4.6" fill="none" stroke="#2b2b2b" stroke-width="1.1"/>
<path d="M1469.3 121.4 L1477.5 129.5 L1474.3 129.7 L1476.8 135 L1475 136 L1472.5 130.8 L1469.3 133.3 Z" fill="#2b2b2b"/>
</svg>
<div class="combo" style="left:1540px;top:444px;width:57px;height:23.5px"></div>
<div style="left:1310px;top:471.3px;width:290px;height:1px;background:#d0d0d0"></div>
<svg style="left:1586px;top:504px" width="14" height="14"><rect x="1.5" y="1.5" width="10.5" height="10.5" rx="2" fill="none" stroke="#7a7a7a" stroke-width="1"/><path d="M4 4 L9.5 9.5 M9.5 4 L4 9.5" stroke="#444" stroke-width="1.8"/></svg>
<div style="left:1326.5px;top:551.7px;width:264px;height:281px;background:#fff;border:1px solid #b8b8b8"></div>
<div style="left:1300px;top:214px;width:283px;height:597px;background:#f0f0f0;box-shadow:0 0 3px rgba(0,0,0,0.2),0 3px 18px rgba(0,0,0,0.26);border:1px solid #d6d6d6;border-top:none"></div>
<div style="left:1300px;top:214px;width:283px;height:31px;background:#fff"></div>
<div class="t" style="left:1308px;top:222.62px;font-size:11.5px;line-height:14px;">Arrange Pages</div>
<div style="left:1563px;top:222px;width:19px;height:19px;background:#c75050"><svg style="left:0;top:0" width="19" height="19"><path d="M7.3 7.3 L11.7 11.7 M11.7 7.3 L7.3 11.7" stroke="#fff" stroke-width="1.5"/></svg></div>
<div class="t" style="left:1305px;top:250.39px;font-size:11px;line-height:14px;letter-spacing:-0.2px">Available Master Pages:</div>
<div style="left:1305px;top:268px;width:273px;height:200px;background:#fff;border:1px solid #adadad"></div>
<div style="left:1306.5px;top:269.3px;width:270.5px;height:13px;background:#e8f4ff;border:1px solid #c7e2fb"></div>
<div class="t" style="left:1308px;top:269.19px;font-size:11px;line-height:14px;">Normal Left</div>
<div class="t" style="left:1308px;top:282.19px;font-size:11px;line-height:14px;">Normal Right</div>
<svg style="left:1434px;top:468px" width="20" height="3"><rect x="1" y="0.5" width="1" height="1" fill="#b0b0b0"/><rect x="4" y="0.5" width="1" height="1" fill="#b0b0b0"/><rect x="7" y="0.5" width="1" height="1" fill="#b0b0b0"/><rect x="10" y="0.5" width="1" height="1" fill="#b0b0b0"/><rect x="13" y="0.5" width="1" height="1" fill="#b0b0b0"/><rect x="16" y="0.5" width="1" height="1" fill="#b0b0b0"/></svg>
<div class="t" style="left:1305px;top:471.69px;font-size:11px;line-height:14px;">Document Pages:</div>
<div style="left:1305px;top:490.5px;width:273px;height:198px;background:#fff;border:1px solid #adadad"></div>
<div style="left:1316.2px;top:528.2px;width:32px;height:36.5px;background:#eeeeee"></div>
<div style="left:1363.8px;top:494px;width:26px;height:29.5px;background:#fff;border:1px solid #6e6e6e"><div class="t" style="left:0;width:24px;text-align:center;top:3px;font-size:10px;line-height:12px">1</div></div>
<div style="left:1363.3px;top:510.5px;width:27px;height:10px;background:#fff;overflow:hidden"><div class="t" style="left:-40px;width:107px;text-align:center;top:-2.5px;font-size:9.5px;line-height:14px;letter-spacing:-0.2px;color:#000">Normal Right</div></div>
<div style="left:1322px;top:531px;width:26px;height:29.5px;background:#c4ddf7;border:1px solid #6e6e6e"><div class="t" style="left:0;width:24px;text-align:center;top:3px;font-size:10px;line-height:12px">2</div></div>
<div style="left:1321.5px;top:547.5px;width:27px;height:10px;background:#c4ddf7;overflow:hidden"><div class="t" style="left:-40px;width:107px;text-align:center;top:-2.5px;font-size:9.5px;line-height:14px;letter-spacing:-0.2px;color:#0a2a6a">Normal Left</div></div>
<div style="left:1363.8px;top:531px;width:26px;height:29.5px;background:#fff;border:1px solid #6e6e6e"><div class="t" style="left:0;width:24px;text-align:center;top:3px;font-size:10px;line-height:12px">3</div></div>
<div style="left:1363.3px;top:547.5px;width:27px;height:10px;background:#fff;overflow:hidden"><div class="t" style="left:-40px;width:107px;text-align:center;top:-2.5px;font-size:9.5px;line-height:14px;letter-spacing:-0.2px;color:#000">Normal Right</div></div>
<div style="left:1322px;top:568px;width:26px;height:29.5px;background:#fff;border:1px solid #6e6e6e"><div class="t" style="left:0;width:24px;text-align:center;top:3px;font-size:10px;line-height:12px">4</div></div>
<div style="left:1321.5px;top:584.5px;width:27px;height:10px;background:#fff;overflow:hidden"><div class="t" style="left:-40px;width:107px;text-align:center;top:-2.5px;font-size:9.5px;line-height:14px;letter-spacing:-0.2px;color:#000">Normal Left</div></div>
<div class="t" style="left:1305px;top:694.69px;font-size:11px;line-height:14px;">Document Layout</div>
<div style="left:1306px;top:712.5px;width:234.6px;height:93.3px;background:#ececec;border:1px solid #d9d9d9;border-radius:2px"></div>
<div class="combo" style="left:1318.4px;top:724.4px;width:209px;height:23.2px"><svg style="left:5.5px;top:3.3px" width="16" height="17"><rect x="0.5" y="0.5" width="14" height="15.5" fill="none" stroke="#222" stroke-width="1"/><path d="M7.5 0.5 V16" stroke="#222" stroke-width="1"/></svg><div class="t" style="left:23.5px;top:4.1px;color:#000">Double Sided</div><div style="position:absolute;left:193.5px;top:8.35px;width:0;height:0;border-left:4.0px solid transparent;border-right:4.0px solid transparent;border-top:4.5px solid #505050"></div></div>
<div class="t" style="left:1317.5px;top:752.99px;font-size:11px;line-height:14px;">First Page is:</div>
<div class="combo" style="left:1318.4px;top:771.3px;width:209px;height:21px"><div class="t" style="left:3.5px;top:3.0px;color:#000">Right Page</div><div style="position:absolute;left:193.5px;top:7.25px;width:0;height:0;border-left:4.0px solid transparent;border-right:4.0px solid transparent;border-top:4.5px solid #505050"></div></div>
<svg style="left:1546px;top:740.1px" width="16" height="19.8" viewBox="0 0 16 20"><rect x="0" y="2.2" width="16" height="2.6" fill="#2b2b2b"/><rect x="5" y="0" width="6" height="3" rx="0.8" fill="#2b2b2b"/><path d="M1.5 5.8 H14.5 L13.7 18.8 Q13.6 20 12.4 20 H3.6 Q2.4 20 2.3 18.8 Z" fill="#2b2b2b"/></svg>
<div style="left:0px;top:843px;width:1600px;height:27px;background:#f0f0f0"></div>
<div class="spin" style="left:632.5px;top:847.7px;width:77px;height:18.8px;background:#fff"><div class="t" style="left:5px;top:1.9000000000000004px;color:#000">27,30 %</div><div style="position:absolute;right:0;top:0;bottom:0;width:14px;border-left:1px solid #c6c6c6;background:#fff"><div style="position:absolute;left:2.5px;top:2.6500000000000004px;width:0;height:0;border-left:4.0px solid transparent;border-right:4.0px solid transparent;border-bottom:4.5px solid #505050"></div><div style="position:absolute;left:2.5px;top:10.65px;width:0;height:0;border-left:4.0px solid transparent;border-right:4.0px solid transparent;border-top:4.5px solid #505050"></div></div></div>
<div style="left:637.8px;top:850.5px;width:1px;height:13px;background:#000"></div>
<svg style="left:0;top:0" width="1600" height="900"><circle cx="719.8" cy="855.5" r="5" fill="none" stroke="#2b2b2b" stroke-width="1.5"/><path d="M723.3 859.0 L727.8 863.5" stroke="#2b2b2b" stroke-width="2.2" stroke-linecap="round"/><path d="M717.3 855.5 H722.3" stroke="#2b2b2b" stroke-width="1.6"/><circle cx="741" cy="855.5" r="5" fill="none" stroke="#2b2b2b" stroke-width="1.5"/><path d="M744.5 859.0 L749 863.5" stroke="#2b2b2b" stroke-width="2.2" stroke-linecap="round"/><circle cx="741" cy="855.5" r="1.5" fill="#2b2b2b"/><circle cx="762" cy="855.5" r="5" fill="none" stroke="#2b2b2b" stroke-width="1.5"/><path d="M765.5 859.0 L770 863.5" stroke="#2b2b2b" stroke-width="2.2" stroke-linecap="round"/><path d="M759.5 855.5 H764.5 M762 853.0 V858.0" stroke="#2b2b2b" stroke-width="1.6"/><rect x="781.2" y="851" width="2.2" height="12" fill="#2b2b2b"/><path d="M784 857 L790 851.3 V854.6 H796.7 V859.4 H790 V862.7 Z" fill="#2b2b2b"/><path d="M803.7 856.8 L809.7 851 V854.4 H817 V859.2 H809.7 V862.6 Z" fill="#2b2b2b"/><path d="M917.7 856.8 L911.7 851 V854.4 H904 V859.2 H911.7 V862.6 Z" fill="#2b2b2b"/><path d="M936 856.8 L930 851 V854.4 H923.7 V859.2 H930 V862.6 Z" fill="#2b2b2b"/><rect x="937.6" y="851" width="2.2" height="12" fill="#2b2b2b"/></svg>
<div style="left:821px;top:846.3px;width:58.5px;height:21.4px;border:1px solid #8f8f8f;background:#fff"><div class="t" style="left:17px;top:2.8px">2</div><div style="left:41.3px;top:0;width:15.2px;height:19.4px;background:linear-gradient(#dedede,#d2d2d2);border-left:1px solid #b4b4b4"><svg style="left:2px;top:3px" width="11" height="13"><path d="M3.8 0.5 H7.2 V6.5 H10.3 L5.5 12 L0.7 6.5 H3.8 Z" fill="#2b2b2b"/></svg></div></div>
<div class="t" style="left:883.7px;top:851.36px;font-size:10.5px;line-height:14px;letter-spacing:-0.4px">of 4</div>
<div style="left:948px;top:846.3px;width:97.5px;height:21.4px;border:1px solid #8f8f8f;background:linear-gradient(#e4e4e4,#d6d6d6)"><div style="left:4.7px;top:3.5px;width:16.2px;height:12.1px;background:#0000ff"></div><div class="t" style="left:24px;top:2.8px;letter-spacing:-0.5px">TEXTS</div><div style="left:80px;top:0;width:15.5px;height:19.4px;border-left:1px solid #b4b4b4"><svg style="left:2px;top:3px" width="11" height="13"><path d="M3.8 0.5 H7.2 V6.5 H10.3 L5.5 12 L0.7 6.5 H3.8 Z" fill="#2b2b2b"/></svg></div></div>
<div class="t" style="left:1319.7px;top:849.83px;font-size:10px;line-height:14px;">X:</div>
<div class="t" style="left:1333.8px;top:849.83px;font-size:10px;line-height:14px;">-5828.72</div>
<div class="t" style="left:1383.5px;top:849.83px;font-size:10px;line-height:14px;">Y:</div>
<div class="t" style="left:1398.5px;top:849.83px;font-size:10px;line-height:14px;">14.26</div>
<div style="left:1447.3px;top:846.2px;width:45.5px;height:24px;border:1px solid #8f8f8f;background:linear-gradient(#e4e4e4,#d6d6d6)"><div class="t" style="left:4.5px;top:4px">pt</div><div style="left:28px;top:0;width:15.5px;height:22px;border-left:1px solid #b4b4b4"><svg style="left:2px;top:4px" width="11" height="13"><path d="M3.8 0.5 H7.2 V6.5 H10.3 L5.5 12 L0.7 6.5 H3.8 Z" fill="#2b2b2b"/></svg></div></div>
<div style="left:1499.4px;top:847px;width:99.3px;height:19px;border:1px solid #c0c0c0;border-radius:3px;background:linear-gradient(#fdfdfd,#f2f2f2)"><div class="t" style="left:0;width:97px;text-align:center;top:1.5px">100%</div></div>
<div style="left:0;top:869.5px;width:1600px;height:30.5px;background:linear-gradient(90deg,#030303 0px,#050505 405px,#1e1e1e 420px,#222 1594px,#000 1595.5px)"></div>
<div style="left:332px;top:869.5px;width:36px;height:30.5px;background:#3a3a3a"></div>
<div style="left:188.3px;top:898px;width:27.299999999999983px;height:2px;background:#99c9ef"></div>
<div style="left:262px;top:898px;width:27.80000000000001px;height:2px;background:#99c9ef"></div>
<div style="left:332px;top:898px;width:36px;height:2px;background:#99c9ef"></div>
<div style="left:373.4px;top:898px;width:27.400000000000034px;height:2px;background:#99c9ef"></div>
<div style="left:410px;top:898px;width:27.5px;height:2px;background:#99c9ef"></div>
<div style="left:447px;top:898px;width:27.19999999999999px;height:2px;background:#99c9ef"></div>
<svg style="left:0;top:0" width="1600" height="900"><path d="M9.7 878.3 L16.5 877.3 V884.3 H9.7 Z M17.5 877.1 L26.3 875.9 V884.3 H17.5 Z M9.7 885.3 H16.5 V892.2 L9.7 891.2 Z M17.5 885.3 H26.3 V893.6 L17.5 892.4 Z" fill="#fff"/><circle cx="56.3" cy="882.3" r="5.3" fill="none" stroke="#fff" stroke-width="1.3"/><path d="M52.5 886.3 L46.5 892.5" stroke="#fff" stroke-width="1.4"/><rect x="84.2" y="878.5" width="11.5" height="13.2" fill="none" stroke="#fff" stroke-width="1.2"/><path d="M82 880.5 H80.3 V889.5 H82 M98 880.5 H99.7 V889.5 H98" fill="none" stroke="#fff" stroke-width="1.1"/><path d="M134.5 886 H124.3 C124.5 890 129.5 891.5 134 889.5 V892.3 C128 894.5 120.5 892 120.5 885.3 C120.5 878.5 127 876.5 131 878 C134 879.2 135 882.3 134.5 886 Z M124.5 883.2 H130.7 C130.5 880.5 125 880.3 124.5 883.2 Z" fill="#1a7fd7"/><path d="M157 879 H162.5 L164 880.5 H173 V892 H157 Z" fill="#e8b93a"/><rect x="157" y="882.5" width="16" height="9.5" fill="#f7d46a"/><path d="M161.2 893 V888 H168.8 V893 H166.5 V890 H163.5 V893 Z" fill="#2a8ee0"/><circle cx="202.3" cy="885" r="7.2" fill="#db4437"/><path d="M202.3 885 L196.06 888.6 A7.2 7.2 0 0 0 208.54000000000002 888.6 Z" fill="#0f9d58"/><path d="M202.3 885 L208.54000000000002 888.6 A7.2 7.2 0 0 0 208.54000000000002 881.4 Z" fill="#f4b400"/><circle cx="202.3" cy="885" r="3.2" fill="#fff"/><circle cx="202.3" cy="885" r="2.4" fill="#4285f4"/><circle cx="238.5" cy="884.8" r="7.2" fill="#2a6fc0"/><path d="M232.5 886 C234 882.5 240 881 244.5 884 L243.5 889 C240 891 235 890.5 232.5 886 Z" fill="#dfe8f0"/><path d="M233 880 C236 877 241 877 244 879.5" stroke="#7ab8ec" stroke-width="1.3" fill="none"/><circle cx="276" cy="884.7" r="7.3" fill="#8a8f94"/><path d="M270.5 886 C272 890 278 890.5 281 886.5 L282 888.5 L283 882 L277.5 884.5 L279.7 885.3 C277.5 888 273.5 888 272 885 Z" fill="#fff"/><circle cx="274" cy="881.5" r="3" fill="#c9ced3"/><path d="M306.5 877.5 H315.5 L320 882 V892.5 H306.5 Z" fill="#f2f2f2"/><path d="M316.5 877 L320 877 V880.5 Z" fill="#b8b8b8"/><circle cx="349.5" cy="885.5" r="7" fill="#2f82c4"/><path d="M344 886 C345 881 347 879 350 878.5 C348.5 882 348 885 348 891 Z" fill="#8cc6ee"/><path d="M348.5 892 L355 878.5 L357.3 880 Z" fill="#d5ad52" stroke="#7a5a1a" stroke-width="0.5"/><path d="M381.5 879 H395 V893 H380 Z" fill="#cfe5ee"/><path d="M382.5 882 H393.5 M382.5 884.5 H393.5 M382.5 887 H393.5 M382.5 889.5 H393.5" stroke="#6aa9c4" stroke-width="0.8"/><path d="M382 877.5 V879.5 M384.5 877.5 V879.5 M387 877.5 V879.5 M389.5 877.5 V879.5 M392 877.5 V879.5" stroke="#ddd" stroke-width="0.8"/><path d="M395 879 V893 H382" stroke="#c8b48a" stroke-width="0.9" fill="none"/><circle cx="424" cy="885" r="7.2" fill="#db4437"/><path d="M424 885 L417.76 888.6 A7.2 7.2 0 0 0 430.24 888.6 Z" fill="#0f9d58"/><path d="M424 885 L430.24 888.6 A7.2 7.2 0 0 0 430.24 881.4 Z" fill="#f4b400"/><circle cx="424" cy="885" r="3.2" fill="#fff"/><circle cx="424" cy="885" r="2.4" fill="#4285f4"/><rect x="454" y="879" width="13" height="13" rx="2" fill="#fff"/><path d="M453 877.5 C458 878 463 882 465.5 891.5 C461 889 456 885 453 877.5 Z" fill="#1f6fd0"/><path d="M456 882 C460 884 463 887 465.5 891.5" stroke="#2fa84f" stroke-width="1.2" fill="none"/><path d="M1402.5 887.5 L1408.3 881.7 L1414 887.5" stroke="#fff" stroke-width="1.1" fill="none"/><path d="M1424.5 881.5 H1427.5 L1431.5 878 V892 L1427.5 888.5 H1424.5 Z" fill="none" stroke="#fff" stroke-width="1"/><path d="M1433.5 882 Q1435 885 1433.5 888 M1435.8 880.3 Q1438.3 885 1435.8 889.7 M1438 878.5 Q1441.5 885 1438 891.5" stroke="#fff" stroke-width="0.9" fill="none"/><path d="M1451.5 891.5 A10 10 0 0 1 1461.5 881.5 M1453.8 891.5 A7.7 7.7 0 0 1 1461.5 883.8 M1456.1 891.5 A5.4 5.4 0 0 1 1461.5 886.1" stroke="#fff" stroke-width="1" fill="none"/><rect x="1459.5" y="888.5" width="3.2" height="3.2" fill="#fff"/><rect x="1477" y="882.3" width="10.5" height="7.5" fill="none" stroke="#fff" stroke-width="1"/><rect x="1478.3" y="883.6" width="5" height="5" fill="#fff"/><rect x="1487.7" y="884.5" width="1.2" height="3" fill="#fff"/><path d="M1472.5 884.5 H1476.5 M1473.5 882 V884.5 M1475.5 882 V884.5 M1474.5 884.5 V889" stroke="#fff" stroke-width="0.9"/><path d="M1496.5 877.3 H1512 V889 H1506.5 L1504 891.8 L1501.5 889 H1496.5 Z" fill="none" stroke="#fff" stroke-width="1.1"/><path d="M1499 880.5 H1509.5 M1499 883 H1509.5 M1499 885.5 H1505" stroke="#fff" stroke-width="0.9"/></svg>
<div class="t" style="left:1543px;top:878.02px;font-size:11.5px;line-height:14px;color:#fff">16:09</div></body></html>
